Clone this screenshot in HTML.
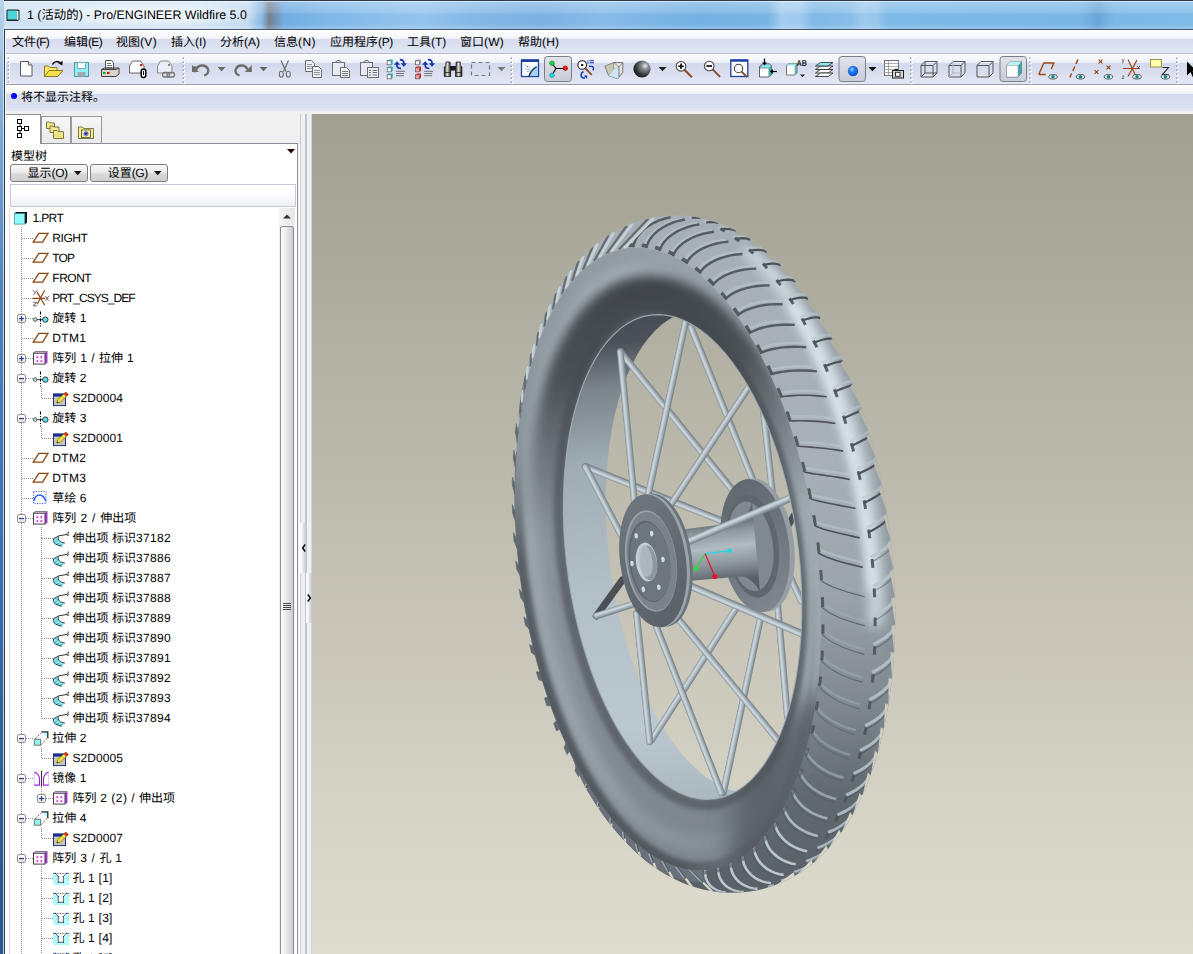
<!DOCTYPE html>
<html><head><meta charset="utf-8"><title>Pro/ENGINEER</title>
<style>
html,body{margin:0;padding:0;}
html{overflow:hidden;width:1193px;height:954px;}
body{text-rendering:geometricPrecision;width:1193px;height:954px;overflow:hidden;position:relative;background:#fff;font-family:"Liberation Sans","Noto Sans CJK SC",sans-serif;font-size:12px;}
#w{position:absolute;left:0;top:0;width:1193px;height:954px;overflow:hidden;}
.a{position:absolute;}
.t{position:absolute;white-space:nowrap;}
svg{display:inline-block;}
svg.i{position:absolute;overflow:visible;}

</style></head>
<body>
<div id="w">
<!-- sec_frame -->
<div class="a" style="left:0px;top:0px;width:1193px;height:30px;background:linear-gradient(90deg,#cfe2f5 0px,#d4e5f6 200px,#c3dbf2 248px,#8cb8e2 262px,#74808e 269px,#7496bd 277px,#72ace0 284px,#80b8e8 330px,#94c4ed 420px,#86b9e7 470px,#7cb1e2 540px,#88bbe9 600px,#74b1e2 700px,#79b5e4 768px,#a4cdf0 782px,#a0caee 800px,#80b9e6 814px,#88bee8 850px,#9dc9ee 862px,#98c6ec 876px,#7ebae8 888px,#7ab7e6 1080px,#6aa5d8 1098px,#7cb8e6 1114px,#80bbe8 1193px);"></div>
<div class="a" style="left:0px;top:0px;width:1193px;height:30px;background:linear-gradient(180deg,rgba(255,255,255,.30) 0,rgba(255,255,255,.16) 40%,rgba(255,255,255,0) 48%,rgba(255,255,255,0) 80%,rgba(255,255,255,.22) 100%);"></div>
<div class="a" style="left:14px;top:3px;width:250px;height:24px;background:radial-gradient(ellipse at center,rgba(255,255,255,.7) 0,rgba(255,255,255,.4) 45%,rgba(255,255,255,0) 72%);"></div>
<div class="a" style="left:0px;top:0px;width:1193px;height:1px;background:#2f3b4b;"></div>
<div class="a" style="left:0px;top:1px;width:1193px;height:1px;background:rgba(255,255,255,.5);"></div>
<div class="a" style="left:0px;top:0px;width:4px;height:954px;background:linear-gradient(180deg,#b9d3ec 0,#a3c4e4 60px,#7fa9d4 130px,#4f82b9 300px,#3f74ad 520px,#2f6097 760px,#2a568a 954px);"></div>
<div class="a" style="left:3px;top:28px;width:1px;height:926px;background:rgba(215,232,248,.85);"></div>
<div class="a" style="left:4px;top:29px;width:1px;height:925px;background:#2b3b52;"></div>
<div class="a" style="left:5px;top:29px;width:1188px;height:1px;background:#45566d;"></div>
<div class="a" style="left:5px;top:30px;width:1px;height:924px;background:#fff;"></div>
<div class="a" style="left:6px;top:30px;width:1187px;height:24px;background:linear-gradient(180deg,#fefeff 0,#f7f8fc 7px,#eff1f9 9px,#d6dbee 9.5px,#dce1f1 16px,#e4e8f5 23px);"></div>
<div class="a" style="left:6px;top:53px;width:1187px;height:1px;background:#b9bed3;"></div>
<div class="a" style="left:6px;top:54px;width:1187px;height:31px;background:linear-gradient(180deg,#fbfcfe 0,#f3f5fb 6px,#eceef8 9px,#d3d9ed 9.5px,#d9deef 18px,#e2e6f4 29px,#e6e9f5 31px);"></div>
<div class="a" style="left:6px;top:84px;width:1187px;height:1px;background:#9a9eb0;"></div>
<div class="a" style="left:6px;top:85px;width:1187px;height:26px;background:linear-gradient(180deg,#ffffff 0,#fcfcfe 3px,#eef0f8 9px,#d5dbee 9.5px,#d9deef 16px,#e0e5f4 25.5px);"></div>
<div class="a" style="left:6px;top:110.5px;width:1187px;height:3.5px;background:#f0f0f0;"></div>
<div class="t" style="left:12px;top:33px;font-size:12px;line-height:18px;color:#000;">文件<span style="letter-spacing:-0.774px">(F)</span></div>
<div class="t" style="left:64px;top:33px;font-size:12px;line-height:18px;color:#000;">编辑<span style="letter-spacing:-0.665px">(E)</span></div>
<div class="t" style="left:116px;top:33px;font-size:12px;line-height:18px;color:#000;">视图<span style="letter-spacing:0.335px">(V)</span></div>
<div class="t" style="left:171px;top:33px;font-size:12px;line-height:18px;color:#000;">插入<span style="letter-spacing:-0.109px">(I)</span></div>
<div class="t" style="left:220px;top:33px;font-size:12px;line-height:18px;color:#000;">分析<span style="letter-spacing:0.001px">(A)</span></div>
<div class="t" style="left:274px;top:33px;font-size:12px;line-height:18px;color:#000;">信息<span style="letter-spacing:0.447px">(N)</span></div>
<div class="t" style="left:330px;top:33px;font-size:12px;line-height:18px;color:#000;">应用程序<span style="letter-spacing:-0.332px">(P)</span></div>
<div class="t" style="left:407px;top:33px;font-size:12px;line-height:18px;color:#000;">工具<span style="letter-spacing:-0.107px">(T)</span></div>
<div class="t" style="left:460px;top:33px;font-size:12px;line-height:18px;color:#000;">窗口<span style="letter-spacing:0.227px">(W)</span></div>
<div class="t" style="left:518px;top:33px;font-size:12px;line-height:18px;color:#000;">帮助<span style="letter-spacing:0.114px">(H)</span></div>
<div class="t" style="left:27px;top:5.5px;font-size:12.4px;line-height:19px;color:#000;"><span style="letter-spacing:0.007px">1 (</span>活动的<span style="letter-spacing:0.007px">) - Pro/ENGINEER Wildfire 5.0</span></div>
<svg class="i" style="left:5px;top:8px" width="16" height="14" viewBox="0 0 16 14"><path d="M2.5 1.5h11l1 1v9l-1.5 1.5h-11l-0.5 -0.5v-10z" fill="#222"/><rect x="2.5" y="2.5" width="9.5" height="9" fill="#49d6d6"/><path d="M12 2.5l1.5 0.5v8.5l-1.5 0.5z" fill="#e8e8e8"/></svg>
<div class="a" style="left:11px;top:93px;width:6px;height:6px;border-radius:3px;background:#0000ff"></div>
<div class="t" style="left:21px;top:88px;font-size:12px;line-height:18px;color:#000;">将不显示注释。</div>
<div class="a" style="left:312px;top:114px;width:881px;height:840px;background:linear-gradient(180deg,#a19f92 0,#b4b2a5 30%,#c9c6b9 62%,#d9d6ca 88%,#dedbcf 100%);"></div>
<div class="a" style="left:298px;top:114px;width:14px;height:840px;background:#f0f0f0;"></div>
<div class="a" style="left:298px;top:144px;width:2px;height:810px;background:#fff;"></div>
<div class="a" style="left:300px;top:114px;width:1px;height:840px;background:#bfcfe2;"></div>
<div class="a" style="left:305px;top:114px;width:2px;height:840px;background:#b9c9dd;"></div>
<div class="a" style="left:311px;top:114px;width:1px;height:840px;background:#c9d8ea;"></div>
<div class="a" style="left:300px;top:523px;width:6px;height:50px;background:linear-gradient(90deg,#ffffff 0,#f4f4f5 35%,#cfcfd2 85%,#c4c6cc 100%);"></div>
<div class="a" style="left:306px;top:573px;width:6px;height:50px;background:linear-gradient(90deg,#ffffff 0,#f4f4f5 35%,#cfcfd2 85%,#c4c6cc 100%);"></div>
<svg class="i" style="left:301px;top:543px" width="6" height="10"><path d="M4.2 1.5L1.6 5l2.6 3.5" fill="none" stroke="#000" stroke-width="1.4"/></svg>
<svg class="i" style="left:306px;top:593px" width="6" height="10"><path d="M1.8 1.5L4.4 5 1.8 8.5" fill="none" stroke="#000" stroke-width="1.4"/></svg>
<!-- sec_toolbar -->
<svg class="i" style="left:0;top:54px" width="1193" height="31" viewBox="0 54 1193 31">
<defs><linearGradient id="selg" x1="0" y1="0" x2="0" y2="1"><stop offset="0" stop-color="#e2e3ea"/><stop offset="1" stop-color="#c9cbd8"/></linearGradient><radialGradient id="sph" cx="0.68" cy="0.32" r="0.8"><stop offset="0" stop-color="#e8ecef"/><stop offset="0.25" stop-color="#8a8f93"/><stop offset="0.7" stop-color="#2e3133"/><stop offset="1" stop-color="#151617"/></radialGradient><radialGradient id="bdot" cx="0.4" cy="0.35" r="0.75"><stop offset="0" stop-color="#9fd0ff"/><stop offset="0.35" stop-color="#1f7bf0"/><stop offset="1" stop-color="#0a49c8"/></radialGradient><linearGradient id="bino" x1="0" y1="0" x2="1" y2="0"><stop offset="0" stop-color="#111"/><stop offset="0.45" stop-color="#e8e6da"/><stop offset="1" stop-color="#111"/></linearGradient></defs>
<rect x="8.1" y="58.1" width="2" height="2" fill="#fff"/><rect x="7.5" y="57.5" width="1.5" height="1.5" fill="#9aa0b4"/><rect x="8.1" y="62.1" width="2" height="2" fill="#fff"/><rect x="7.5" y="61.5" width="1.5" height="1.5" fill="#9aa0b4"/><rect x="8.1" y="66.1" width="2" height="2" fill="#fff"/><rect x="7.5" y="65.5" width="1.5" height="1.5" fill="#9aa0b4"/><rect x="8.1" y="70.1" width="2" height="2" fill="#fff"/><rect x="7.5" y="69.5" width="1.5" height="1.5" fill="#9aa0b4"/><rect x="8.1" y="74.1" width="2" height="2" fill="#fff"/><rect x="7.5" y="73.5" width="1.5" height="1.5" fill="#9aa0b4"/><rect x="8.1" y="78.1" width="2" height="2" fill="#fff"/><rect x="7.5" y="77.5" width="1.5" height="1.5" fill="#9aa0b4"/><rect x="8.1" y="82.1" width="2" height="2" fill="#fff"/><rect x="7.5" y="81.5" width="1.5" height="1.5" fill="#9aa0b4"/>
<rect x="183.1" y="58.1" width="2" height="2" fill="#fff"/><rect x="182.5" y="57.5" width="1.5" height="1.5" fill="#9aa0b4"/><rect x="183.1" y="62.1" width="2" height="2" fill="#fff"/><rect x="182.5" y="61.5" width="1.5" height="1.5" fill="#9aa0b4"/><rect x="183.1" y="66.1" width="2" height="2" fill="#fff"/><rect x="182.5" y="65.5" width="1.5" height="1.5" fill="#9aa0b4"/><rect x="183.1" y="70.1" width="2" height="2" fill="#fff"/><rect x="182.5" y="69.5" width="1.5" height="1.5" fill="#9aa0b4"/><rect x="183.1" y="74.1" width="2" height="2" fill="#fff"/><rect x="182.5" y="73.5" width="1.5" height="1.5" fill="#9aa0b4"/><rect x="183.1" y="78.1" width="2" height="2" fill="#fff"/><rect x="182.5" y="77.5" width="1.5" height="1.5" fill="#9aa0b4"/><rect x="183.1" y="82.1" width="2" height="2" fill="#fff"/><rect x="182.5" y="81.5" width="1.5" height="1.5" fill="#9aa0b4"/>
<rect x="511.1" y="58.1" width="2" height="2" fill="#fff"/><rect x="510.5" y="57.5" width="1.5" height="1.5" fill="#9aa0b4"/><rect x="511.1" y="62.1" width="2" height="2" fill="#fff"/><rect x="510.5" y="61.5" width="1.5" height="1.5" fill="#9aa0b4"/><rect x="511.1" y="66.1" width="2" height="2" fill="#fff"/><rect x="510.5" y="65.5" width="1.5" height="1.5" fill="#9aa0b4"/><rect x="511.1" y="70.1" width="2" height="2" fill="#fff"/><rect x="510.5" y="69.5" width="1.5" height="1.5" fill="#9aa0b4"/><rect x="511.1" y="74.1" width="2" height="2" fill="#fff"/><rect x="510.5" y="73.5" width="1.5" height="1.5" fill="#9aa0b4"/><rect x="511.1" y="78.1" width="2" height="2" fill="#fff"/><rect x="510.5" y="77.5" width="1.5" height="1.5" fill="#9aa0b4"/><rect x="511.1" y="82.1" width="2" height="2" fill="#fff"/><rect x="510.5" y="81.5" width="1.5" height="1.5" fill="#9aa0b4"/>
<rect x="910.6" y="58.1" width="2" height="2" fill="#fff"/><rect x="910" y="57.5" width="1.5" height="1.5" fill="#9aa0b4"/><rect x="910.6" y="62.1" width="2" height="2" fill="#fff"/><rect x="910" y="61.5" width="1.5" height="1.5" fill="#9aa0b4"/><rect x="910.6" y="66.1" width="2" height="2" fill="#fff"/><rect x="910" y="65.5" width="1.5" height="1.5" fill="#9aa0b4"/><rect x="910.6" y="70.1" width="2" height="2" fill="#fff"/><rect x="910" y="69.5" width="1.5" height="1.5" fill="#9aa0b4"/><rect x="910.6" y="74.1" width="2" height="2" fill="#fff"/><rect x="910" y="73.5" width="1.5" height="1.5" fill="#9aa0b4"/><rect x="910.6" y="78.1" width="2" height="2" fill="#fff"/><rect x="910" y="77.5" width="1.5" height="1.5" fill="#9aa0b4"/><rect x="910.6" y="82.1" width="2" height="2" fill="#fff"/><rect x="910" y="81.5" width="1.5" height="1.5" fill="#9aa0b4"/>
<rect x="1029.6" y="58.1" width="2" height="2" fill="#fff"/><rect x="1029" y="57.5" width="1.5" height="1.5" fill="#9aa0b4"/><rect x="1029.6" y="62.1" width="2" height="2" fill="#fff"/><rect x="1029" y="61.5" width="1.5" height="1.5" fill="#9aa0b4"/><rect x="1029.6" y="66.1" width="2" height="2" fill="#fff"/><rect x="1029" y="65.5" width="1.5" height="1.5" fill="#9aa0b4"/><rect x="1029.6" y="70.1" width="2" height="2" fill="#fff"/><rect x="1029" y="69.5" width="1.5" height="1.5" fill="#9aa0b4"/><rect x="1029.6" y="74.1" width="2" height="2" fill="#fff"/><rect x="1029" y="73.5" width="1.5" height="1.5" fill="#9aa0b4"/><rect x="1029.6" y="78.1" width="2" height="2" fill="#fff"/><rect x="1029" y="77.5" width="1.5" height="1.5" fill="#9aa0b4"/><rect x="1029.6" y="82.1" width="2" height="2" fill="#fff"/><rect x="1029" y="81.5" width="1.5" height="1.5" fill="#9aa0b4"/>
<rect x="1176.6" y="58.1" width="2" height="2" fill="#fff"/><rect x="1176" y="57.5" width="1.5" height="1.5" fill="#9aa0b4"/><rect x="1176.6" y="62.1" width="2" height="2" fill="#fff"/><rect x="1176" y="61.5" width="1.5" height="1.5" fill="#9aa0b4"/><rect x="1176.6" y="66.1" width="2" height="2" fill="#fff"/><rect x="1176" y="65.5" width="1.5" height="1.5" fill="#9aa0b4"/><rect x="1176.6" y="70.1" width="2" height="2" fill="#fff"/><rect x="1176" y="69.5" width="1.5" height="1.5" fill="#9aa0b4"/><rect x="1176.6" y="74.1" width="2" height="2" fill="#fff"/><rect x="1176" y="73.5" width="1.5" height="1.5" fill="#9aa0b4"/><rect x="1176.6" y="78.1" width="2" height="2" fill="#fff"/><rect x="1176" y="77.5" width="1.5" height="1.5" fill="#9aa0b4"/><rect x="1176.6" y="82.1" width="2" height="2" fill="#fff"/><rect x="1176" y="81.5" width="1.5" height="1.5" fill="#9aa0b4"/>
<path d="M20.5 61.5h8l3.5 3.5v11h-11.5z" fill="#fff" stroke="#5a5a5a"/><path d="M28.5 61.5v3.5h3.5" fill="#e8e8e8" stroke="#5a5a5a"/>
<path d="M44.5 76.5v-10.5h4l1.5 1.5h7v3" fill="#f7e96a" stroke="#8a7a20"/><path d="M44.5 76.5l4.5 -6h14l-5.5 6z" fill="#f3df4a" stroke="#8a7a20"/><path d="M52.5 64.5c1.5 -3.5 6 -4 8 -0.8" fill="none" stroke="#000" stroke-width="1.4"/><path d="M58.3 63.2l4 2.2 0.4 -4.4z" fill="#000"/>
<rect x="74.5" y="62.5" width="14" height="14" fill="#8ff1f6" stroke="#4a9aa8"/><rect x="77.5" y="62.5" width="8" height="6" fill="#fff" stroke="#7ab"/><rect x="77.5" y="72" width="8" height="4.5" fill="#a8a8b0"/>
<path d="M105.5 69v-8.5h6l2 2v6.5z" fill="#fff" stroke="#555"/><path d="M107 63.5h4M107 65.5h5M107 67.5h5" stroke="#555" stroke-width=".8"/><path d="M101.5 69.5h14.5l3 -1.5v6l-3 2.5h-14.5z" fill="#d8d6cc" stroke="#444"/><path d="M101.5 69.5l3 -1.5h14.5" fill="none" stroke="#444"/><rect x="103" y="72" width="2.5" height="2" fill="#1a1"/><rect x="107" y="72" width="2.5" height="2" fill="#c11"/>
<path d="M129.5 66l3 -5h8l3.5 5v7h-14.5z" fill="#fff" stroke="#666"/><rect x="140" y="64" width="2.2" height="2.2" fill="#d11"/><rect x="141.2" y="69" width="4.6" height="8.5" rx="2.3" fill="#fff" stroke="#000" stroke-width="1.5"/><path d="M143.5 71v4" stroke="#000"/>
<path d="M157.5 66l3 -5h8l3.5 5v7h-14.5z" fill="#eceef6" stroke="#8a8a8a"/><rect x="168" y="64" width="2" height="2" fill="#888"/><rect x="162.5" y="72.5" width="7" height="4.5" rx="2.2" fill="none" stroke="#777" stroke-width="1.3"/><rect x="167" y="72.5" width="7.5" height="4.5" rx="2.2" fill="none" stroke="#777" stroke-width="1.3"/>
<path d="M196.5 69.5c1 -4.5 9 -6 11.5 -0.5c1.2 3 -0.8 5.8 -3.8 6.4" fill="none" stroke="#6e6e6e" stroke-width="2.4"/><path d="M191.8 66.2l7.6 0.6 -4.8 5.9z" fill="#6e6e6e"/><path d="M192 65v7h7z" fill="#6e6e6e"/>
<path d="M217.5 67h8l-4 4.2z" fill="#666"/>
<path d="M247.3 69.5c-1 -4.5 -9 -6 -11.5 -0.5c-1.2 3 0.8 5.8 3.8 6.4" fill="none" stroke="#6e6e6e" stroke-width="2.4"/><path d="M251.8 65v7h-7z" fill="#6e6e6e"/>
<path d="M259.5 67h8l-4 4.2z" fill="#666"/>
<path d="M281 60.5l5 11M288.5 60.5l-5 11" stroke="#6e6e6e" stroke-width="1.2" fill="none"/><ellipse cx="281.3" cy="74.3" rx="2" ry="3" fill="none" stroke="#6e6e6e" stroke-width="1.1"/><ellipse cx="288.3" cy="74.3" rx="2" ry="3" fill="none" stroke="#6e6e6e" stroke-width="1.1"/>
<path d="M305.5 60.500h6l3 3v8h-9z" fill="#eef0f8" stroke="#6e6e6e"/><path d="M307 64.500h5M307 66.500h5M307 68.500h5" stroke="#6e6e6e" stroke-width=".7"/><path d="M312.5 66.500h6l3 3v8h-9z" fill="#eef0f8" stroke="#6e6e6e"/><path d="M314 70.500h6M314 72.500h6M314 74.500h6" stroke="#6e6e6e" stroke-width=".7"/>
<rect x="332.500" y="62.500" width="12" height="13" fill="#e8eaf3" stroke="#6e6e6e"/><path d="M335.500 62.500l1.500 -2h3l1.500 2z" fill="#e8eaf3" stroke="#6e6e6e"/><path d="M340.500 67.500h6l3 3v7h-9z" fill="#eef0f8" stroke="#6e6e6e"/><path d="M342 71.500h6M342 73.500h6M342 75.500h6" stroke="#6e6e6e" stroke-width=".9"/>
<rect x="360.500" y="62.500" width="12" height="13" fill="#e8eaf3" stroke="#6e6e6e"/><path d="M363.500 62.500l1.500 -2h3l1.500 2z" fill="#e8eaf3" stroke="#6e6e6e"/><rect x="367.500" y="67.500" width="11" height="10" fill="#eef0f8" stroke="#6e6e6e"/><path d="M369 70.500h2M372.500 70.500h4.500M369 72.500h2M372.500 72.500h4.500M369 75h2M372.500 75h4.500" stroke="#6e6e6e" stroke-width="1.1"/>
<path d="M387 60.8l1.500 -1.300h4.300v4.300l-1.500 1.300z" fill="#19c4c8"/><rect x="387.2" y="60.8" width="4" height="4" fill="#fff" stroke="#666" stroke-width=".8"/><path d="M387 67.8l1.500 -1.300h4.300v4.300l-1.500 1.300z" fill="#19c4c8"/><rect x="387.2" y="67.8" width="4" height="4" fill="#fff" stroke="#666" stroke-width=".8"/><path d="M387 74.8l1.500 -1.300h4.300v4.300l-1.500 1.300z" fill="#19c4c8"/><rect x="387.2" y="74.8" width="4" height="4" fill="#fff" stroke="#666" stroke-width=".8"/><path d="M397 62.200v3c0 2 1.500 3.200 4 3.200" fill="none" stroke="#0c34b8" stroke-width="1.700"/><path d="M393.9 64.800l3.100 -3.600 3.100 3.600z" fill="#0c34b8"/><path d="M399.8 59.600c2.500 0 4 1.200 4 3.200v1.500" fill="none" stroke="#0c34b8" stroke-width="1.700"/><path d="M400.7 63.200l3.100 3.600 3.100 -3.600z" fill="#0c34b8"/><path d="M396 71.300h9M396 73.500h8M396 75.700h8" stroke="#666" stroke-width=".9"/>
<path d="M415.2 60.8l1.500 -1.300h4.300v4.300l-1.500 1.300z" fill="#aaa"/><rect x="415.4" y="60.8" width="4" height="4" fill="#f4f4f4" stroke="#666" stroke-width=".8"/><path d="M415.2 67.8l1.500 -1.300h4.300v4.300l-1.500 1.300z" fill="#e01818"/><rect x="415.4" y="67.8" width="4" height="4" fill="#ff9a9a" stroke="#666" stroke-width=".8"/><path d="M415.2 74.8l1.500 -1.300h4.300v4.300l-1.500 1.300z" fill="#e01818"/><rect x="415.4" y="74.8" width="4" height="4" fill="#ff9a9a" stroke="#666" stroke-width=".8"/><path d="M425.2 62.200v3c0 2 1.500 3.200 4 3.200" fill="none" stroke="#0c34b8" stroke-width="1.700"/><path d="M422.1 64.800l3.100 -3.600 3.100 3.600z" fill="#0c34b8"/><path d="M428 59.600c2.500 0 4 1.200 4 3.200v1.500" fill="none" stroke="#0c34b8" stroke-width="1.700"/><path d="M428.9 63.200l3.100 3.600 3.100 -3.600z" fill="#0c34b8"/><path d="M424.2 71.300h9M424.2 73.500h8M424.2 75.700h8" stroke="#666" stroke-width=".9"/>
<path d="M444.300 76.500v-9.500l1.600 -1.500v-3.500h4.200v3.500l0.600 1.500v9.500z" fill="url(#bino)" stroke="#111" stroke-width=".7"/><path d="M455.500 76.500v-9.500l0.600 -1.500v-3.500h4.200v3.500l1.600 1.500v9.500z" fill="url(#bino)" stroke="#111" stroke-width=".7"/><rect x="450.500" y="66" width="5.200" height="4.500" fill="#1a1a1a"/><path d="M444.300 72.500h6.400M455.500 72.500h6.400" stroke="#222" stroke-width=".8"/>
<rect x="471.500" y="62.500" width="18" height="13" fill="none" stroke="#7a7a7a" stroke-width="1.2" stroke-dasharray="4 3"/>
<path d="M497.5 67h8l-4 4.2z" fill="#777"/>
<rect x="521.500" y="60" width="17" height="16.500" fill="#fff" stroke="#1c3fa0" stroke-width="1.3"/><rect x="521.500" y="59.500" width="17" height="2.500" fill="#1c3fa0"/><path d="M529 76v-4c2 -3 5 -6 9 -7v11z" fill="#a8d0f0"/><path d="M529 76c1.500 -4 4 -7 7.500 -9" fill="none" stroke="#223" stroke-width="1.300"/><path d="M525 64.500l1 1M527 66l1 1M526 68.500l1 1M528.500 69l1 1M529 66.500l1 1M527.500 71l1 1" stroke="#2a6fd0" stroke-width="1"/>
<rect x="544.5" y="56.5" width="27" height="25" rx="3" fill="url(#selg)" stroke="#7d7d84" stroke-width="1"/>
<path d="M552 63.500l4 5 -4 6.500M556 68.500h9" fill="none" stroke="#000" stroke-width="1.200"/><circle cx="552" cy="63.300" r="2.300" fill="#1fd34a" stroke="#0a7a22" stroke-width=".6"/><circle cx="565.300" cy="68.200" r="2.300" fill="#ee1c1c" stroke="#900" stroke-width=".6"/><circle cx="552" cy="75.200" r="2.300" fill="#22d8e8" stroke="#0a8a98" stroke-width=".6"/>
<path d="M585.500 68.500l6.300 6.300" stroke="#8a4a2a" stroke-width="1.800"/><circle cx="582.200" cy="65" r="4.300" fill="#fff" stroke="#222" stroke-width="1.100"/><rect x="581.200" y="64" width="2" height="2" fill="#000"/><path d="M589.500 60.800h4.500M589.500 62.800h4.500" stroke="#0c34b8" stroke-width="1.100"/><rect x="587.300" y="60.300" width="1.200" height="1.200" fill="#0c34b8"/><rect x="587.300" y="62.300" width="1.200" height="1.200" fill="#0c34b8"/><path d="M589 66.300h3c1.800 0.400 1.800 2.600 0.800 4" fill="none" stroke="#0c34b8" stroke-width="1.300"/><path d="M583.500 71.500c-3 1.500 -3.500 5 -0.500 6.500h2" fill="none" stroke="#0c34b8" stroke-width="1.500"/><path d="M583.800 75.500h3.400v3.400z" fill="#0c34b8"/>
<path d="M605 66.300l8.700 -3.700h9.100v9.700l-5.100 6.400 -9 -3z" fill="#e6e5dc" stroke="#666" stroke-width=".9"/><path d="M605 66.300l8.700 -3.700v11.400l-5 1.700z" fill="#c9c6b4" stroke="#777" stroke-width=".6"/><path d="M608.700 75.700l5 -6.500 5.300 -2.200v10l-1.300 1.700z" fill="#cfe6f8" stroke="#8ab" stroke-width=".5"/><path d="M613.700 62.600l5.300 4.400 3.800 -4.400M619 67v10" fill="none" stroke="#777" stroke-width=".8"/>
<circle cx="642" cy="69" r="8.600" fill="url(#sph)"/>
<path d="M658.5 67h8l-4 4.200z" fill="#222"/>
<path d="M684.4 69.700l7.500 7.500" stroke="#8a4a2a" stroke-width="2"/><circle cx="681" cy="66.300" r="4.800" fill="#fff" stroke="#444" stroke-width="1.100"/><path d="M678.2 66.300h5.600" stroke="#000" stroke-width="1.600"/><path d="M681 63.500v5.600" stroke="#000" stroke-width="1.600"/>
<path d="M712.6 69.400l7.500 7.500" stroke="#8a4a2a" stroke-width="2"/><circle cx="709.2" cy="66" r="4.800" fill="#fff" stroke="#444" stroke-width="1.100"/><path d="M706.4 66h5.600" stroke="#000" stroke-width="1.600"/>
<rect x="730.800" y="60" width="17" height="16.500" fill="#fff" stroke="#1c3fa0" stroke-width="1.300"/><rect x="730.800" y="59.500" width="17" height="2.200" fill="#1c3fa0"/><path d="M741.500 71.500l5.500 5.500" stroke="#8a4a2a" stroke-width="1.800"/><circle cx="738.500" cy="68.500" r="4.200" fill="#fff" stroke="#444" stroke-width="1.100"/>
<path d="M759.500 66.500l3 -2.500h7l2 2v9l-3 2h-9z" fill="#fff" stroke="#555" stroke-width=".9"/><path d="M762.500 64l7 0 2 2 -3 2h-9z" fill="#8fe8ee" stroke="#555" stroke-width=".6"/><path d="M768.500 68v9l3 -2v-9z" fill="#49a7b0"/><path d="M764.500 58.500v5" stroke="#000" stroke-width="1.200"/><path d="M762 62.500h5l-2.500 3z" fill="#000"/><path d="M777 71.500h-5" stroke="#000" stroke-width="1.200"/><path d="M773 69v5l-3.200 -2.500z" fill="#000"/>
<path d="M786.500 65.500l2.500 -2h8v9.500l-2.500 2h-8z" fill="#fff" stroke="#666" stroke-width=".9"/><path d="M789 63.500h8l-2.500 2h-8z" fill="#8fe8ee"/><path d="M794.500 65.500v9.500l2.500 -2v-9.500z" fill="#49a7b0" opacity=".8"/><text x="796.500" y="66" font-family="Liberation Sans" font-size="8.500" font-weight="bold" fill="#222" textLength="10.500" lengthAdjust="spacingAndGlyphs">AB</text><path d="M800 74.500h5l-2.500 2.800z" fill="#222"/>
<path d="M815.500 73l5 -3.500h12.500l-5 3.500z" fill="#fff" stroke="#333" stroke-width=".9"/><path d="M815.500 76.500l5 -3.500h12.500l-5 3.500z" fill="#fff" stroke="#333" stroke-width=".9"/><path d="M815.500 69.500l5 -3.500h12.500l-5 3.500z" fill="#fff" stroke="#333" stroke-width=".9"/><path d="M815.500 66l5 -3.500h12.500l-5 3.500z" fill="#8fe8ee" stroke="#333" stroke-width=".9"/>
<rect x="839" y="56.5" width="26.5" height="25" rx="3" fill="url(#selg)" stroke="#7d7d84" stroke-width="1"/>
<circle cx="853" cy="71" r="5.200" fill="url(#bdot)"/>
<path d="M868.5 67h8l-4 4.2z" fill="#111"/>
<rect x="884.500" y="60.500" width="14" height="15" fill="#fff" stroke="#666" stroke-width=".9"/><path d="M884.500 63.500h14M884.500 66.500h14M884.500 69.500h14M884.500 72.500h14M888.500 60.500v15" stroke="#888" stroke-width=".7"/><rect x="892.500" y="70.500" width="11" height="7.500" fill="#d6d4cc" stroke="#222" stroke-width="1"/><rect x="894.500" y="68.800" width="3.500" height="2" fill="#222"/><rect x="895.500" y="72.300" width="4.500" height="4" fill="#fff" stroke="#222" stroke-width=".9"/>
<path d="M921 65.500h12v11.500h-12zM921 65.500l4 -4h12l-4 4M933 77l4 -4v-11.500" fill="none" stroke="#555" stroke-width="1"/><path d="M921 77l4 -4h12M925 61.500v11.500" fill="none" stroke="#555" stroke-width="1"/>
<path d="M949 65.500h12v11.500h-12zM949 65.500l4 -4h12l-4 4M961 77l4 -4v-11.500" fill="none" stroke="#555" stroke-width="1"/><path d="M949 77l4 -4h12M953 61.500v11.500" fill="none" stroke="#b5b5bb" stroke-width="1"/>
<path d="M977 65.500h12v11.500h-12zM977 65.500l4 -4h12l-4 4M989 77l4 -4v-11.500" fill="none" stroke="#555" stroke-width="1"/>
<rect x="1000" y="56.5" width="26.5" height="25" rx="3" fill="url(#selg)" stroke="#7d7d84" stroke-width="1"/>
<path d="M1006.500 65.500l3.500 -4h11.500v11.500l-3.500 4h-11.500z" fill="#fff" stroke="#667" stroke-width=".8"/><path d="M1006.500 65.500l3.500 -4h11.500l-3.500 4z" fill="#b9f1f4"/><path d="M1018 65.500l3.500 -4v11.500l-3.500 4z" fill="#3fa3ad"/><rect x="1006.500" y="65.500" width="11.500" height="11.500" fill="#fff" stroke="#99a" stroke-width=".6"/>
<path d="M1038.800 74.500l5 -11.500h10l-2.500 6M1038.800 74.500h7" fill="none" stroke="#9a4a14" stroke-width="1.400"/><ellipse cx="1053" cy="76.800" rx="4.300" ry="2.200" fill="#e8f4f4" stroke="#333" stroke-width=".8"/><circle cx="1053" cy="76.800" r="1.800" fill="#138a8a"/>
<path d="M1078 59.500l-2 4.500M1074.800 66.500l-2 4.500M1071.600 73.500l-1.800 4" stroke="#9a4a14" stroke-width="1.500"/><ellipse cx="1080.500" cy="76.800" rx="4.300" ry="2.200" fill="#e8f4f4" stroke="#333" stroke-width=".8"/><circle cx="1080.500" cy="76.800" r="1.800" fill="#138a8a"/>
<path d="M1098.600 59.600l3.800 3.800M1102.400 59.600l-3.800 3.800" stroke="#9a4a14" stroke-width="1.2"/><path d="M1094.600 70.100l3.800 3.800M1098.400 70.100l-3.800 3.800" stroke="#9a4a14" stroke-width="1.2"/><path d="M1106.600 65.600l3.800 3.800M1110.400 65.600l-3.800 3.800" stroke="#9a4a14" stroke-width="1.2"/><ellipse cx="1108.500" cy="76.800" rx="4.300" ry="2.200" fill="#e8f4f4" stroke="#333" stroke-width=".8"/><circle cx="1108.500" cy="76.800" r="1.800" fill="#138a8a"/>
<path d="M1128 59.500l8 17M1137 60l-9 16.500M1123 68.500h17" stroke="#9a4a14" stroke-width="1.200"/><path d="M1137 66l3 3M1140 66l-3 3" stroke="#555" stroke-width="0.9"/><text x="1121.500" y="62" font-family="Liberation Sans" font-size="6" fill="#444">y</text><text x="1121.500" y="79" font-family="Liberation Sans" font-size="6" fill="#444">z</text><ellipse cx="1137" cy="76.800" rx="4.300" ry="2.200" fill="#e8f4f4" stroke="#333" stroke-width=".8"/><circle cx="1137" cy="76.800" r="1.800" fill="#138a8a"/>
<rect x="1150.500" y="59.500" width="11" height="7.500" fill="#ffffa8" stroke="#8a8a40" stroke-width=".9"/><path d="M1162.500 67.500h6l-6 7h6" fill="none" stroke="#222" stroke-width="1.100"/><ellipse cx="1165.500" cy="76.800" rx="4.300" ry="2.200" fill="#e8f4f4" stroke="#333" stroke-width=".8"/><circle cx="1165.500" cy="76.800" r="1.800" fill="#138a8a"/>
<path d="M1187 61.500v14l3.500 -3.500 2.500 5.500 2 -1 -2.500 -5.500h4z" fill="#000"/>
</svg>
<!-- sec_panel -->
<div class="a" style="left:6px;top:114px;width:293px;height:840px;background:#f0f0f0;"></div>
<div class="a" style="left:6px;top:143px;width:292px;height:811px;background:#fff;border-top:1px solid #8b8f97;border-right:1px solid #8b8f97;box-sizing:border-box;"></div>
<div class="a" style="left:41px;top:116px;width:30px;height:27px;background:linear-gradient(180deg,#f6f6f6,#e9e9e9);border:1px solid #9a9a9a;border-bottom:none;box-sizing:border-box;"></div>
<div class="a" style="left:71px;top:116px;width:31px;height:27px;background:linear-gradient(180deg,#f6f6f6,#e9e9e9);border:1px solid #9a9a9a;border-bottom:none;box-sizing:border-box;"></div>
<div class="a" style="left:6px;top:114px;width:35px;height:30px;background:#fff;border:1px solid #8b8f97;border-bottom:none;border-left:none;box-sizing:border-box;"></div>
<svg class="i" style="left:0;top:114px" width="110" height="30" viewBox="0 114 110 30"><path d="M20 124.500v9M20 128.500h5" stroke="#000" stroke-width="1" fill="none"/><rect x="17.500" y="119.500" width="4" height="4" fill="#fff" stroke="#000"/><rect x="17.500" y="126.500" width="4" height="4" fill="#fff" stroke="#000"/><rect x="17.500" y="133.500" width="4" height="4" fill="#fff" stroke="#000"/><rect x="24.500" y="126.500" width="4" height="4" fill="#fff" stroke="#000"/><path d="M46.500 128.500v-6.500h3l1 1h4v5.500z" fill="#f5e98a" stroke="#6b6b3a" stroke-width=".9"/><path d="M50 132.500v-6.500h3l1 1h5v5.500z" fill="#f5e98a" stroke="#6b6b3a" stroke-width=".9"/><path d="M53.500 138.500v-8h3.500l1 1.200h5.500v6.800z" fill="#f7ee9a" stroke="#6b6b3a" stroke-width=".9"/><rect x="54.500" y="133.500" width="8" height="4" fill="#efe27a"/><path d="M78.500 138.500v-11.500h4l1.200 1.500h9.800v10z" fill="#f7ee8a" stroke="#6b6b3a" stroke-width=".9"/><rect x="81.500" y="130" width="9" height="7.500" fill="#fff9a0" stroke="#333" stroke-width=".7"/><path d="M86 131v5.500M83.300 133.800h5.400M84.200 131.900l3.600 3.700M87.800 131.900l-3.600 3.700" stroke="#1a1ae0" stroke-width="1"/></svg>
<div class="t" style="left:11px;top:146.500px;font-size:12px;line-height:18px;color:#000;">模型树</div>
<svg class="i" style="left:287px;top:149px" width="8" height="5"><path d="M0 0h8l-4 4.500z" fill="#200"/></svg>
<div class="a" style="left:10px;top:164px;width:78px;height:18px;background:linear-gradient(180deg,#f8f8f8 0,#ececec 45%,#d9d9d9 55%,#cfcfcf 100%);border:1px solid #7b7b7b;border-radius:3px;box-sizing:border-box;"></div>
<div class="t" style="left:27.6px;top:163.500px;font-size:12px;line-height:18px;color:#000;">显示<span style="letter-spacing:-0.442px">(O)</span></div>
<svg class="i" style="left:73.5px;top:170.500px" width="8" height="5"><path d="M0 0h7.500l-3.750 4.200z" fill="#111"/></svg>
<div class="a" style="left:90px;top:164px;width:78px;height:18px;background:linear-gradient(180deg,#f8f8f8 0,#ececec 45%,#d9d9d9 55%,#cfcfcf 100%);border:1px solid #7b7b7b;border-radius:3px;box-sizing:border-box;"></div>
<div class="t" style="left:107.8px;top:163.500px;font-size:12px;line-height:18px;color:#000;">设置<span style="letter-spacing:-0.442px">(G)</span></div>
<svg class="i" style="left:153.5px;top:170.500px" width="8" height="5"><path d="M0 0h7.500l-3.750 4.200z" fill="#111"/></svg>
<div class="a" style="left:10px;top:184px;width:286px;height:23px;background:linear-gradient(180deg,#fff 0,#fff 40%,#eceef4 100%);border:1px solid #c6c9d6;box-sizing:border-box;"></div>
<div class="a" style="left:9px;top:208px;width:1px;height:746px;background:#d9dbe8;"></div>
<div class="a" style="left:279px;top:208px;width:16px;height:746px;background:#f0f0f0;"></div>
<div class="a" style="left:279px;top:208px;width:16px;height:17px;background:linear-gradient(90deg,#f4f4f4,#e6e6e6);"></div>
<svg class="i" style="left:283px;top:214px" width="8" height="5"><path d="M0 4.500l4 -4 4 4z" fill="#333"/></svg>
<div class="a" style="left:279.5px;top:226px;width:14.5px;height:740px;background:linear-gradient(90deg,#fbfbfb 0,#efeff1 35%,#dcdce0 70%,#c9c9cf 100%);border:1px solid #8e8e94;border-radius:2px;box-sizing:border-box;"></div>
<svg class="i" style="left:283px;top:603px" width="8" height="8"><path d="M0 .500h8M0 2.500h8M0 4.500h8M0 6.500h8" stroke="#444" stroke-width="1"/></svg>
<div class="t" style="left:32.5px;top:208.500px;font-size:12px;line-height:18px;color:#000;"><span style="letter-spacing:-0.642px">1.PRT</span></div>
<div class="t" style="left:52.3px;top:228.500px;font-size:12px;line-height:18px;color:#000;"><span style="letter-spacing:-0.426px">RIGHT</span></div>
<div class="t" style="left:52.3px;top:248.500px;font-size:12px;line-height:18px;color:#000;"><span style="letter-spacing:-0.889px">TOP</span></div>
<div class="t" style="left:52.3px;top:268.500px;font-size:12px;line-height:18px;color:#000;"><span style="letter-spacing:-0.485px">FRONT</span></div>
<div class="t" style="left:52.3px;top:288.500px;font-size:12px;line-height:18px;color:#000;"><span style="letter-spacing:-0.952px">PRT_CSYS_DEF</span></div>
<div class="t" style="left:52.3px;top:308.500px;font-size:12px;line-height:18px;color:#000;">旋转<span style="letter-spacing:0.146px"> 1</span></div>
<div class="t" style="left:52.3px;top:328.500px;font-size:12px;line-height:18px;color:#000;"><span style="letter-spacing:0.358px">DTM1</span></div>
<div class="t" style="left:52.3px;top:348.500px;font-size:12px;line-height:18px;color:#000;">阵列<span style="letter-spacing:0.540px"> 1 / </span>拉伸<span style="letter-spacing:0.540px"> 1</span></div>
<div class="t" style="left:52.3px;top:368.500px;font-size:12px;line-height:18px;color:#000;">旋转<span style="letter-spacing:0.146px"> 2</span></div>
<div class="t" style="left:72.4px;top:388.500px;font-size:12px;line-height:18px;color:#000;"><span style="letter-spacing:0.066px">S2D0004</span></div>
<div class="t" style="left:52.3px;top:408.500px;font-size:12px;line-height:18px;color:#000;">旋转<span style="letter-spacing:0.146px"> 3</span></div>
<div class="t" style="left:72.4px;top:428.500px;font-size:12px;line-height:18px;color:#000;"><span style="letter-spacing:0.066px">S2D0001</span></div>
<div class="t" style="left:52.3px;top:448.500px;font-size:12px;line-height:18px;color:#000;"><span style="letter-spacing:0.358px">DTM2</span></div>
<div class="t" style="left:52.3px;top:468.500px;font-size:12px;line-height:18px;color:#000;"><span style="letter-spacing:0.358px">DTM3</span></div>
<div class="t" style="left:52.3px;top:488.500px;font-size:12px;line-height:18px;color:#000;">草绘<span style="letter-spacing:0.146px"> 6</span></div>
<div class="t" style="left:52.3px;top:508.500px;font-size:12px;line-height:18px;color:#000;">阵列<span style="letter-spacing:0.798px"> 2 / </span>伸出项</div>
<div class="t" style="left:72.4px;top:528.500px;font-size:12px;line-height:18px;color:#000;">伸出项<span style="letter-spacing:0.299px"> </span>标识<span style="letter-spacing:0.299px">37182</span></div>
<div class="t" style="left:72.4px;top:548.500px;font-size:12px;line-height:18px;color:#000;">伸出项<span style="letter-spacing:0.299px"> </span>标识<span style="letter-spacing:0.299px">37886</span></div>
<div class="t" style="left:72.4px;top:568.500px;font-size:12px;line-height:18px;color:#000;">伸出项<span style="letter-spacing:0.299px"> </span>标识<span style="letter-spacing:0.299px">37887</span></div>
<div class="t" style="left:72.4px;top:588.500px;font-size:12px;line-height:18px;color:#000;">伸出项<span style="letter-spacing:0.299px"> </span>标识<span style="letter-spacing:0.299px">37888</span></div>
<div class="t" style="left:72.4px;top:608.500px;font-size:12px;line-height:18px;color:#000;">伸出项<span style="letter-spacing:0.299px"> </span>标识<span style="letter-spacing:0.299px">37889</span></div>
<div class="t" style="left:72.4px;top:628.500px;font-size:12px;line-height:18px;color:#000;">伸出项<span style="letter-spacing:0.299px"> </span>标识<span style="letter-spacing:0.299px">37890</span></div>
<div class="t" style="left:72.4px;top:648.500px;font-size:12px;line-height:18px;color:#000;">伸出项<span style="letter-spacing:0.299px"> </span>标识<span style="letter-spacing:0.299px">37891</span></div>
<div class="t" style="left:72.4px;top:668.500px;font-size:12px;line-height:18px;color:#000;">伸出项<span style="letter-spacing:0.299px"> </span>标识<span style="letter-spacing:0.299px">37892</span></div>
<div class="t" style="left:72.4px;top:688.500px;font-size:12px;line-height:18px;color:#000;">伸出项<span style="letter-spacing:0.299px"> </span>标识<span style="letter-spacing:0.299px">37893</span></div>
<div class="t" style="left:72.4px;top:708.500px;font-size:12px;line-height:18px;color:#000;">伸出项<span style="letter-spacing:0.299px"> </span>标识<span style="letter-spacing:0.299px">37894</span></div>
<div class="t" style="left:52.3px;top:728.500px;font-size:12px;line-height:18px;color:#000;">拉伸<span style="letter-spacing:0.146px"> 2</span></div>
<div class="t" style="left:72.4px;top:748.500px;font-size:12px;line-height:18px;color:#000;"><span style="letter-spacing:0.066px">S2D0005</span></div>
<div class="t" style="left:52.3px;top:768.500px;font-size:12px;line-height:18px;color:#000;">镜像<span style="letter-spacing:0.146px"> 1</span></div>
<div class="t" style="left:72.4px;top:788.500px;font-size:12px;line-height:18px;color:#000;">阵列<span style="letter-spacing:0.499px"> 2 (2) / </span>伸出项</div>
<div class="t" style="left:52.3px;top:808.500px;font-size:12px;line-height:18px;color:#000;">拉伸<span style="letter-spacing:0.146px"> 4</span></div>
<div class="t" style="left:72.4px;top:828.500px;font-size:12px;line-height:18px;color:#000;"><span style="letter-spacing:0.066px">S2D0007</span></div>
<div class="t" style="left:52.3px;top:848.500px;font-size:12px;line-height:18px;color:#000;">阵列<span style="letter-spacing:0.612px"> 3 / </span>孔<span style="letter-spacing:0.612px"> 1</span></div>
<div class="t" style="left:72.4px;top:868.500px;font-size:12px;line-height:18px;color:#000;">孔<span style="letter-spacing:0.269px"> 1 [1]</span></div>
<div class="t" style="left:72.4px;top:888.500px;font-size:12px;line-height:18px;color:#000;">孔<span style="letter-spacing:0.269px"> 1 [2]</span></div>
<div class="t" style="left:72.4px;top:908.500px;font-size:12px;line-height:18px;color:#000;">孔<span style="letter-spacing:0.269px"> 1 [3]</span></div>
<div class="t" style="left:72.4px;top:928.500px;font-size:12px;line-height:18px;color:#000;">孔<span style="letter-spacing:0.269px"> 1 [4]</span></div>
<div class="t" style="left:72.4px;top:948.500px;font-size:12px;line-height:18px;color:#000;">孔<span style="letter-spacing:0.269px"> 1 [5]</span></div>
<svg class="i" style="left:0;top:208px" width="279" height="746" viewBox="0 208 279 746"><path d="M21.500 227v740" stroke="#8a8a8a" stroke-width="1" stroke-dasharray="1 1"/><path d="M14.5 213.600l1.500 -1.500h11v10.500l-1.500 1.500z" fill="#111"/><rect x="14.3" y="213.600" width="10.500" height="10.500" fill="#8ffafa" stroke="#3a8a90" stroke-width=".7"/><path d="M22 238.500h11" stroke="#8a8a8a" stroke-width="1" stroke-dasharray="1 1"/><path d="M33.2 242.200l5.600 -8.800h9.200l-5.400 8.800z" fill="none" stroke="#8b4513" stroke-width="1.300"/><path d="M22 258.500h11" stroke="#8a8a8a" stroke-width="1" stroke-dasharray="1 1"/><path d="M33.2 262.200l5.600 -8.800h9.200l-5.400 8.800z" fill="none" stroke="#8b4513" stroke-width="1.300"/><path d="M22 278.500h11" stroke="#8a8a8a" stroke-width="1" stroke-dasharray="1 1"/><path d="M33.2 282.200l5.600 -8.800h9.200l-5.400 8.800z" fill="none" stroke="#8b4513" stroke-width="1.300"/><path d="M22 298.500h11" stroke="#8a8a8a" stroke-width="1" stroke-dasharray="1 1"/><g transform="translate(33 297.600)"><path d="M0 0.800h12M4.100 -5.500l7.600 13.200M11.700 -7.400l-7.600 14.100" stroke="#8b4513" stroke-width="1.200" fill="none"/><path d="M12.300 -1.300l3.400 4.300M15.700 -1.300l-3.400 4.300" stroke="#555" stroke-width="1"/><path d="M0.200 -7.300l2 2.400 2.200 -2.600M2.200 -4.900l-1.600 2.200" stroke="#555" stroke-width=".9" fill="none"/><path d="M0.300 4.800h3.400l-3.600 3.400h3.800" stroke="#555" stroke-width=".9" fill="none"/></g><path d="M22 318.500h11" stroke="#8a8a8a" stroke-width="1" stroke-dasharray="1 1"/><rect x="17.500" y="314.500" width="8" height="8" rx="1.500" fill="#fbfbfb" stroke="#919191" stroke-width="1"/><rect x="18.500" y="319" width="6" height="3" fill="#e4e4e4"/><path d="M19 318.500h5" stroke="#2a3c94" stroke-width="1.200"/><path d="M21.500 316v5" stroke="#2a3c94" stroke-width="1.200"/><path d="M35 319.600h11" stroke="#333" stroke-width=".9"/><path d="M40.500 311.600v15" stroke="#000" stroke-width="1.100" stroke-dasharray="3 1.500 1 1.500"/><circle cx="35.2" cy="319.600" r="1.800" fill="#b8f4f6" stroke="#333" stroke-width=".8"/><circle cx="45.3" cy="319.600" r="2.700" fill="#5fe0e6" stroke="#222" stroke-width=".9"/><path d="M22 338.500h11" stroke="#8a8a8a" stroke-width="1" stroke-dasharray="1 1"/><path d="M33.2 342.200l5.600 -8.800h9.200l-5.400 8.800z" fill="none" stroke="#8b4513" stroke-width="1.300"/><path d="M22 358.500h11" stroke="#8a8a8a" stroke-width="1" stroke-dasharray="1 1"/><rect x="17.500" y="354.500" width="8" height="8" rx="1.500" fill="#fbfbfb" stroke="#919191" stroke-width="1"/><rect x="18.500" y="359" width="6" height="3" fill="#e4e4e4"/><path d="M19 358.500h5" stroke="#2a3c94" stroke-width="1.200"/><path d="M21.500 356v5" stroke="#2a3c94" stroke-width="1.200"/><path d="M34 353.100l1.500 -1.500h12v11l-1.500 1.500z" fill="#a040d0"/><rect x="33.500" y="353.100" width="11.500" height="11" fill="#fbf4ff" stroke="#333" stroke-width=".9"/><path d="M33.500 353.100l1.500 -1.500h12l-1.500 1.500z" fill="#e8c8f4" stroke="#444" stroke-width=".6"/><rect x="36.500" y="356.300" width="1.600" height="1.600" fill="#e010e0"/><rect x="36.500" y="360.300" width="1.600" height="1.600" fill="#e010e0"/><rect x="40.500" y="356.300" width="1.600" height="1.600" fill="#e010e0"/><rect x="40.500" y="360.300" width="1.600" height="1.600" fill="#e010e0"/><path d="M22 378.500h11" stroke="#8a8a8a" stroke-width="1" stroke-dasharray="1 1"/><rect x="17.500" y="374.500" width="8" height="8" rx="1.500" fill="#fbfbfb" stroke="#919191" stroke-width="1"/><rect x="18.500" y="379" width="6" height="3" fill="#e4e4e4"/><path d="M19 378.500h5" stroke="#2a3c94" stroke-width="1.200"/><path d="M35 379.600h11" stroke="#333" stroke-width=".9"/><path d="M40.500 371.600v15" stroke="#000" stroke-width="1.100" stroke-dasharray="3 1.500 1 1.500"/><circle cx="35.2" cy="379.600" r="1.800" fill="#b8f4f6" stroke="#333" stroke-width=".8"/><circle cx="45.3" cy="379.600" r="2.700" fill="#5fe0e6" stroke="#222" stroke-width=".9"/><path d="M41.500 387V398.500" stroke="#8a8a8a" stroke-width="1" stroke-dasharray="1 1"/><path d="M42 398.500h11" stroke="#8a8a8a" stroke-width="1" stroke-dasharray="1 1"/><rect x="53.500" y="394.100" width="12" height="11.500" fill="#c9c6b2" stroke="#1c2f8a" stroke-width="1"/><rect x="53" y="393.600" width="13" height="3" fill="#1c2f8a"/><path d="M56.800 403.100l1 -3.500 8 -7.500 2.500 2.500 -8 7.500z" fill="#f6e23a" stroke="#5a4a10" stroke-width=".6"/><path d="M63.800 394l2 -1.900 2.500 2.500 -2 1.900z" fill="#d02a1a"/><path d="M56.800 403.100l0.500 -1.700 1.200 1.200z" fill="#222"/><path d="M22 418.500h11" stroke="#8a8a8a" stroke-width="1" stroke-dasharray="1 1"/><rect x="17.500" y="414.500" width="8" height="8" rx="1.500" fill="#fbfbfb" stroke="#919191" stroke-width="1"/><rect x="18.500" y="419" width="6" height="3" fill="#e4e4e4"/><path d="M19 418.500h5" stroke="#2a3c94" stroke-width="1.200"/><path d="M35 419.600h11" stroke="#333" stroke-width=".9"/><path d="M40.500 411.600v15" stroke="#000" stroke-width="1.100" stroke-dasharray="3 1.500 1 1.500"/><circle cx="35.2" cy="419.600" r="1.800" fill="#b8f4f6" stroke="#333" stroke-width=".8"/><circle cx="45.3" cy="419.600" r="2.700" fill="#5fe0e6" stroke="#222" stroke-width=".9"/><path d="M41.500 427V438.500" stroke="#8a8a8a" stroke-width="1" stroke-dasharray="1 1"/><path d="M42 438.500h11" stroke="#8a8a8a" stroke-width="1" stroke-dasharray="1 1"/><rect x="53.500" y="434.100" width="12" height="11.500" fill="#c9c6b2" stroke="#1c2f8a" stroke-width="1"/><rect x="53" y="433.600" width="13" height="3" fill="#1c2f8a"/><path d="M56.800 443.100l1 -3.500 8 -7.500 2.500 2.500 -8 7.500z" fill="#f6e23a" stroke="#5a4a10" stroke-width=".6"/><path d="M63.800 434l2 -1.900 2.500 2.500 -2 1.900z" fill="#d02a1a"/><path d="M56.800 443.100l0.500 -1.700 1.200 1.200z" fill="#222"/><path d="M22 458.500h11" stroke="#8a8a8a" stroke-width="1" stroke-dasharray="1 1"/><path d="M33.2 462.200l5.600 -8.800h9.200l-5.400 8.800z" fill="none" stroke="#8b4513" stroke-width="1.300"/><path d="M22 478.500h11" stroke="#8a8a8a" stroke-width="1" stroke-dasharray="1 1"/><path d="M33.2 482.200l5.600 -8.800h9.200l-5.400 8.800z" fill="none" stroke="#8b4513" stroke-width="1.300"/><path d="M22 498.500h11" stroke="#8a8a8a" stroke-width="1" stroke-dasharray="1 1"/><rect x="33.500" y="491.600" width="12.500" height="12" fill="none" stroke="#1a3ae0" stroke-width="1" stroke-dasharray="1 1.500"/><path d="M33.800 501.100c2 -8 9 -8 12 0" fill="none" stroke="#1a5af0" stroke-width="1.500"/><path d="M22 518.500h11" stroke="#8a8a8a" stroke-width="1" stroke-dasharray="1 1"/><rect x="17.500" y="514.500" width="8" height="8" rx="1.500" fill="#fbfbfb" stroke="#919191" stroke-width="1"/><rect x="18.500" y="519" width="6" height="3" fill="#e4e4e4"/><path d="M19 518.500h5" stroke="#2a3c94" stroke-width="1.200"/><path d="M34 513.100l1.500 -1.500h12v11l-1.500 1.500z" fill="#a040d0"/><rect x="33.500" y="513.100" width="11.500" height="11" fill="#fbf4ff" stroke="#333" stroke-width=".9"/><path d="M33.500 513.100l1.500 -1.500h12l-1.500 1.500z" fill="#e8c8f4" stroke="#444" stroke-width=".6"/><rect x="36.500" y="516.300" width="1.600" height="1.600" fill="#e010e0"/><rect x="36.500" y="520.300" width="1.600" height="1.600" fill="#e010e0"/><rect x="40.500" y="516.300" width="1.600" height="1.600" fill="#e010e0"/><rect x="40.500" y="520.300" width="1.600" height="1.600" fill="#e010e0"/><path d="M41.500 527V538.500" stroke="#8a8a8a" stroke-width="1" stroke-dasharray="1 1"/><path d="M42 538.500h11" stroke="#8a8a8a" stroke-width="1" stroke-dasharray="1 1"/><g transform="translate(53 537.600)"><path d="M6 -1.800L0.500 1.200C0 3 0.800 5 2.500 6.600L8.800 8.700L11.800 5.400C8 5 5 3.500 5.200 0.200Z" fill="#9af2f5"/><path d="M2 2.500l3 -1M1.500 4.500l4 -1.500M3 6.500l4.500 -1.500M6 8l4 -1.800" stroke="#2ab8c0" stroke-width=".8"/><path d="M15.500 -6L14.800 -3.600L12 -2.800L6 -1.800L0.500 1.200C0 3 0.800 5 2.500 6.600L8.800 8.700" fill="none" stroke="#333" stroke-width="1"/><path d="M5.500 -0.500C4.500 2.500 7 4.800 11.800 5.400" fill="none" stroke="#333" stroke-width="1"/><path d="M13.300 -3.200l1.700 1.400 1 -1.600" fill="none" stroke="#333" stroke-width=".8"/></g><path d="M41.500 538V558.500" stroke="#8a8a8a" stroke-width="1" stroke-dasharray="1 1"/><path d="M42 558.500h11" stroke="#8a8a8a" stroke-width="1" stroke-dasharray="1 1"/><g transform="translate(53 557.600)"><path d="M6 -1.800L0.500 1.200C0 3 0.800 5 2.500 6.600L8.800 8.700L11.800 5.400C8 5 5 3.500 5.200 0.200Z" fill="#9af2f5"/><path d="M2 2.500l3 -1M1.500 4.500l4 -1.500M3 6.500l4.500 -1.500M6 8l4 -1.800" stroke="#2ab8c0" stroke-width=".8"/><path d="M15.500 -6L14.800 -3.600L12 -2.800L6 -1.800L0.500 1.200C0 3 0.800 5 2.500 6.600L8.800 8.700" fill="none" stroke="#333" stroke-width="1"/><path d="M5.500 -0.500C4.500 2.500 7 4.800 11.800 5.400" fill="none" stroke="#333" stroke-width="1"/><path d="M13.300 -3.200l1.700 1.400 1 -1.600" fill="none" stroke="#333" stroke-width=".8"/></g><path d="M41.500 558V578.500" stroke="#8a8a8a" stroke-width="1" stroke-dasharray="1 1"/><path d="M42 578.500h11" stroke="#8a8a8a" stroke-width="1" stroke-dasharray="1 1"/><g transform="translate(53 577.600)"><path d="M6 -1.800L0.500 1.200C0 3 0.800 5 2.500 6.600L8.800 8.700L11.800 5.400C8 5 5 3.500 5.200 0.200Z" fill="#9af2f5"/><path d="M2 2.500l3 -1M1.500 4.500l4 -1.500M3 6.500l4.500 -1.500M6 8l4 -1.800" stroke="#2ab8c0" stroke-width=".8"/><path d="M15.500 -6L14.800 -3.600L12 -2.800L6 -1.800L0.500 1.200C0 3 0.800 5 2.500 6.600L8.800 8.700" fill="none" stroke="#333" stroke-width="1"/><path d="M5.500 -0.500C4.500 2.500 7 4.800 11.800 5.400" fill="none" stroke="#333" stroke-width="1"/><path d="M13.300 -3.200l1.700 1.400 1 -1.600" fill="none" stroke="#333" stroke-width=".8"/></g><path d="M41.500 578V598.500" stroke="#8a8a8a" stroke-width="1" stroke-dasharray="1 1"/><path d="M42 598.500h11" stroke="#8a8a8a" stroke-width="1" stroke-dasharray="1 1"/><g transform="translate(53 597.600)"><path d="M6 -1.800L0.500 1.200C0 3 0.800 5 2.500 6.600L8.800 8.700L11.800 5.400C8 5 5 3.500 5.200 0.200Z" fill="#9af2f5"/><path d="M2 2.500l3 -1M1.500 4.500l4 -1.500M3 6.500l4.500 -1.500M6 8l4 -1.800" stroke="#2ab8c0" stroke-width=".8"/><path d="M15.500 -6L14.800 -3.600L12 -2.800L6 -1.800L0.500 1.200C0 3 0.800 5 2.500 6.600L8.800 8.700" fill="none" stroke="#333" stroke-width="1"/><path d="M5.500 -0.500C4.500 2.500 7 4.800 11.800 5.400" fill="none" stroke="#333" stroke-width="1"/><path d="M13.300 -3.200l1.700 1.400 1 -1.600" fill="none" stroke="#333" stroke-width=".8"/></g><path d="M41.500 598V618.500" stroke="#8a8a8a" stroke-width="1" stroke-dasharray="1 1"/><path d="M42 618.500h11" stroke="#8a8a8a" stroke-width="1" stroke-dasharray="1 1"/><g transform="translate(53 617.600)"><path d="M6 -1.800L0.500 1.200C0 3 0.800 5 2.500 6.600L8.800 8.700L11.800 5.400C8 5 5 3.500 5.200 0.200Z" fill="#9af2f5"/><path d="M2 2.500l3 -1M1.500 4.500l4 -1.500M3 6.500l4.500 -1.500M6 8l4 -1.800" stroke="#2ab8c0" stroke-width=".8"/><path d="M15.500 -6L14.800 -3.600L12 -2.800L6 -1.800L0.500 1.200C0 3 0.800 5 2.500 6.600L8.800 8.700" fill="none" stroke="#333" stroke-width="1"/><path d="M5.500 -0.500C4.500 2.500 7 4.800 11.800 5.400" fill="none" stroke="#333" stroke-width="1"/><path d="M13.300 -3.200l1.700 1.400 1 -1.600" fill="none" stroke="#333" stroke-width=".8"/></g><path d="M41.500 618V638.500" stroke="#8a8a8a" stroke-width="1" stroke-dasharray="1 1"/><path d="M42 638.500h11" stroke="#8a8a8a" stroke-width="1" stroke-dasharray="1 1"/><g transform="translate(53 637.600)"><path d="M6 -1.800L0.500 1.200C0 3 0.800 5 2.500 6.600L8.800 8.700L11.800 5.400C8 5 5 3.500 5.200 0.200Z" fill="#9af2f5"/><path d="M2 2.500l3 -1M1.500 4.500l4 -1.500M3 6.500l4.500 -1.500M6 8l4 -1.800" stroke="#2ab8c0" stroke-width=".8"/><path d="M15.500 -6L14.800 -3.600L12 -2.800L6 -1.800L0.500 1.200C0 3 0.800 5 2.500 6.600L8.800 8.700" fill="none" stroke="#333" stroke-width="1"/><path d="M5.500 -0.500C4.500 2.500 7 4.800 11.800 5.400" fill="none" stroke="#333" stroke-width="1"/><path d="M13.300 -3.200l1.700 1.400 1 -1.600" fill="none" stroke="#333" stroke-width=".8"/></g><path d="M41.500 638V658.500" stroke="#8a8a8a" stroke-width="1" stroke-dasharray="1 1"/><path d="M42 658.500h11" stroke="#8a8a8a" stroke-width="1" stroke-dasharray="1 1"/><g transform="translate(53 657.600)"><path d="M6 -1.800L0.500 1.200C0 3 0.800 5 2.500 6.600L8.800 8.700L11.800 5.400C8 5 5 3.500 5.200 0.200Z" fill="#9af2f5"/><path d="M2 2.500l3 -1M1.500 4.500l4 -1.500M3 6.500l4.500 -1.500M6 8l4 -1.800" stroke="#2ab8c0" stroke-width=".8"/><path d="M15.500 -6L14.800 -3.600L12 -2.800L6 -1.800L0.500 1.200C0 3 0.800 5 2.500 6.600L8.800 8.700" fill="none" stroke="#333" stroke-width="1"/><path d="M5.500 -0.500C4.500 2.500 7 4.800 11.800 5.400" fill="none" stroke="#333" stroke-width="1"/><path d="M13.300 -3.200l1.700 1.400 1 -1.600" fill="none" stroke="#333" stroke-width=".8"/></g><path d="M41.500 658V678.500" stroke="#8a8a8a" stroke-width="1" stroke-dasharray="1 1"/><path d="M42 678.500h11" stroke="#8a8a8a" stroke-width="1" stroke-dasharray="1 1"/><g transform="translate(53 677.600)"><path d="M6 -1.800L0.500 1.200C0 3 0.800 5 2.500 6.600L8.800 8.700L11.800 5.400C8 5 5 3.500 5.200 0.200Z" fill="#9af2f5"/><path d="M2 2.500l3 -1M1.500 4.500l4 -1.500M3 6.500l4.500 -1.500M6 8l4 -1.800" stroke="#2ab8c0" stroke-width=".8"/><path d="M15.500 -6L14.800 -3.600L12 -2.800L6 -1.800L0.500 1.200C0 3 0.800 5 2.500 6.600L8.800 8.700" fill="none" stroke="#333" stroke-width="1"/><path d="M5.500 -0.500C4.500 2.500 7 4.800 11.800 5.400" fill="none" stroke="#333" stroke-width="1"/><path d="M13.300 -3.200l1.700 1.400 1 -1.600" fill="none" stroke="#333" stroke-width=".8"/></g><path d="M41.500 678V698.500" stroke="#8a8a8a" stroke-width="1" stroke-dasharray="1 1"/><path d="M42 698.500h11" stroke="#8a8a8a" stroke-width="1" stroke-dasharray="1 1"/><g transform="translate(53 697.600)"><path d="M6 -1.800L0.500 1.200C0 3 0.800 5 2.500 6.600L8.800 8.700L11.800 5.400C8 5 5 3.500 5.200 0.200Z" fill="#9af2f5"/><path d="M2 2.500l3 -1M1.500 4.500l4 -1.500M3 6.500l4.500 -1.500M6 8l4 -1.800" stroke="#2ab8c0" stroke-width=".8"/><path d="M15.500 -6L14.800 -3.600L12 -2.800L6 -1.800L0.500 1.200C0 3 0.800 5 2.500 6.600L8.800 8.700" fill="none" stroke="#333" stroke-width="1"/><path d="M5.500 -0.500C4.500 2.500 7 4.800 11.800 5.400" fill="none" stroke="#333" stroke-width="1"/><path d="M13.300 -3.200l1.700 1.400 1 -1.600" fill="none" stroke="#333" stroke-width=".8"/></g><path d="M41.500 698V718.500" stroke="#8a8a8a" stroke-width="1" stroke-dasharray="1 1"/><path d="M42 718.500h11" stroke="#8a8a8a" stroke-width="1" stroke-dasharray="1 1"/><g transform="translate(53 717.600)"><path d="M6 -1.800L0.500 1.200C0 3 0.800 5 2.500 6.600L8.800 8.700L11.800 5.400C8 5 5 3.500 5.200 0.200Z" fill="#9af2f5"/><path d="M2 2.500l3 -1M1.500 4.500l4 -1.500M3 6.500l4.500 -1.500M6 8l4 -1.800" stroke="#2ab8c0" stroke-width=".8"/><path d="M15.500 -6L14.800 -3.600L12 -2.800L6 -1.800L0.500 1.200C0 3 0.800 5 2.500 6.600L8.800 8.700" fill="none" stroke="#333" stroke-width="1"/><path d="M5.500 -0.500C4.500 2.500 7 4.800 11.800 5.400" fill="none" stroke="#333" stroke-width="1"/><path d="M13.300 -3.200l1.700 1.400 1 -1.600" fill="none" stroke="#333" stroke-width=".8"/></g><path d="M22 738.500h11" stroke="#8a8a8a" stroke-width="1" stroke-dasharray="1 1"/><rect x="17.500" y="734.500" width="8" height="8" rx="1.500" fill="#fbfbfb" stroke="#919191" stroke-width="1"/><rect x="18.500" y="739" width="6" height="3" fill="#e4e4e4"/><path d="M19 738.500h5" stroke="#2a3c94" stroke-width="1.200"/><g transform="translate(33 737.600)"><path d="M2 1.500l6.500 -6.500M7.500 7.500l6.500 -6.500" stroke="#555" stroke-width="1" stroke-dasharray="2.200 1.600"/><path d="M9.500 -5.200h5v5z" fill="#a8f4f6"/><path d="M8.500 -5.700h6.300v6.300" fill="none" stroke="#2a2a2a" stroke-width="1.300"/><rect x="1.300" y="1.600" width="6.300" height="6" fill="#8ff6f8" stroke="#777" stroke-width="1"/></g><path d="M41.500 747V758.500" stroke="#8a8a8a" stroke-width="1" stroke-dasharray="1 1"/><path d="M42 758.500h11" stroke="#8a8a8a" stroke-width="1" stroke-dasharray="1 1"/><rect x="53.500" y="754.100" width="12" height="11.500" fill="#c9c6b2" stroke="#1c2f8a" stroke-width="1"/><rect x="53" y="753.600" width="13" height="3" fill="#1c2f8a"/><path d="M56.800 763.100l1 -3.500 8 -7.500 2.500 2.500 -8 7.500z" fill="#f6e23a" stroke="#5a4a10" stroke-width=".6"/><path d="M63.800 754l2 -1.900 2.500 2.500 -2 1.900z" fill="#d02a1a"/><path d="M56.800 763.100l0.500 -1.700 1.200 1.200z" fill="#222"/><path d="M22 778.500h11" stroke="#8a8a8a" stroke-width="1" stroke-dasharray="1 1"/><rect x="17.500" y="774.500" width="8" height="8" rx="1.500" fill="#fbfbfb" stroke="#919191" stroke-width="1"/><rect x="18.500" y="779" width="6" height="3" fill="#e4e4e4"/><path d="M19 778.500h5" stroke="#2a3c94" stroke-width="1.200"/><g transform="translate(33 777.600)"><path d="M8.500 -7v16" stroke="#333" stroke-width="1.100"/><path d="M1.500 -5.500v13" stroke="#d8d0ff" stroke-width="1"/><path d="M15.500 -5.500v13" stroke="#d8d0ff" stroke-width="1"/><path d="M1.500 -5.700c3.500 1.500 5 4 5 7.500v5.700h-5.300" fill="none" stroke="#a020e0" stroke-width="1.100"/><path d="M15.500 -5.700c-3.500 1.500 -5 4 -5 7.500v5.700h5.300" fill="none" stroke="#a020e0" stroke-width="1.100"/></g><path d="M41.500 787V798.500" stroke="#8a8a8a" stroke-width="1" stroke-dasharray="1 1"/><path d="M42 798.500h11" stroke="#8a8a8a" stroke-width="1" stroke-dasharray="1 1"/><rect x="37.500" y="794.500" width="8" height="8" rx="1.500" fill="#fbfbfb" stroke="#919191" stroke-width="1"/><rect x="38.500" y="799" width="6" height="3" fill="#e4e4e4"/><path d="M39 798.500h5" stroke="#2a3c94" stroke-width="1.200"/><path d="M41.500 796v5" stroke="#2a3c94" stroke-width="1.200"/><path d="M54 793.100l1.500 -1.500h12v11l-1.500 1.500z" fill="#a040d0"/><rect x="53.500" y="793.100" width="11.500" height="11" fill="#fbf4ff" stroke="#333" stroke-width=".9"/><path d="M53.500 793.100l1.500 -1.500h12l-1.500 1.500z" fill="#e8c8f4" stroke="#444" stroke-width=".6"/><rect x="56.500" y="796.300" width="1.600" height="1.600" fill="#e010e0"/><rect x="56.500" y="800.300" width="1.600" height="1.600" fill="#e010e0"/><rect x="60.500" y="796.300" width="1.600" height="1.600" fill="#e010e0"/><rect x="60.500" y="800.300" width="1.600" height="1.600" fill="#e010e0"/><path d="M22 818.500h11" stroke="#8a8a8a" stroke-width="1" stroke-dasharray="1 1"/><rect x="17.500" y="814.500" width="8" height="8" rx="1.500" fill="#fbfbfb" stroke="#919191" stroke-width="1"/><rect x="18.500" y="819" width="6" height="3" fill="#e4e4e4"/><path d="M19 818.500h5" stroke="#2a3c94" stroke-width="1.200"/><g transform="translate(33 817.600)"><path d="M2 1.500l6.500 -6.500M7.500 7.500l6.500 -6.500" stroke="#555" stroke-width="1" stroke-dasharray="2.200 1.600"/><path d="M9.500 -5.200h5v5z" fill="#a8f4f6"/><path d="M8.500 -5.700h6.300v6.300" fill="none" stroke="#2a2a2a" stroke-width="1.300"/><rect x="1.300" y="1.600" width="6.300" height="6" fill="#8ff6f8" stroke="#777" stroke-width="1"/></g><path d="M41.500 827V838.500" stroke="#8a8a8a" stroke-width="1" stroke-dasharray="1 1"/><path d="M42 838.500h11" stroke="#8a8a8a" stroke-width="1" stroke-dasharray="1 1"/><rect x="53.500" y="834.100" width="12" height="11.500" fill="#c9c6b2" stroke="#1c2f8a" stroke-width="1"/><rect x="53" y="833.600" width="13" height="3" fill="#1c2f8a"/><path d="M56.800 843.100l1 -3.500 8 -7.500 2.500 2.500 -8 7.500z" fill="#f6e23a" stroke="#5a4a10" stroke-width=".6"/><path d="M63.800 834l2 -1.900 2.500 2.500 -2 1.900z" fill="#d02a1a"/><path d="M56.800 843.100l0.500 -1.700 1.200 1.200z" fill="#222"/><path d="M22 858.500h11" stroke="#8a8a8a" stroke-width="1" stroke-dasharray="1 1"/><rect x="17.500" y="854.500" width="8" height="8" rx="1.500" fill="#fbfbfb" stroke="#919191" stroke-width="1"/><rect x="18.500" y="859" width="6" height="3" fill="#e4e4e4"/><path d="M19 858.500h5" stroke="#2a3c94" stroke-width="1.200"/><path d="M34 853.100l1.500 -1.500h12v11l-1.500 1.500z" fill="#a040d0"/><rect x="33.500" y="853.100" width="11.500" height="11" fill="#fbf4ff" stroke="#333" stroke-width=".9"/><path d="M33.500 853.100l1.500 -1.500h12l-1.500 1.500z" fill="#e8c8f4" stroke="#444" stroke-width=".6"/><rect x="36.500" y="856.300" width="1.600" height="1.600" fill="#e010e0"/><rect x="36.500" y="860.300" width="1.600" height="1.600" fill="#e010e0"/><rect x="40.500" y="856.300" width="1.600" height="1.600" fill="#e010e0"/><rect x="40.500" y="860.300" width="1.600" height="1.600" fill="#e010e0"/><path d="M41.500 867V878.500" stroke="#8a8a8a" stroke-width="1" stroke-dasharray="1 1"/><path d="M42 878.500h11" stroke="#8a8a8a" stroke-width="1" stroke-dasharray="1 1"/><g transform="translate(53 877)"><rect x="0" y="-4" width="16.200" height="12" fill="#93f6f7"/><path d="M0 8l12 -12M4 8l12 -12M0 4l8 -8M8 8l8.200 -8.200M12 8l4.200 -4.200M0 0l4 -4" stroke="#e4fefe" stroke-width="1.100"/><path d="M2.600 -4h10.800v0.400l-3 3.200v5.700h-5.100v-5.700l-2.700 -3.200z" fill="#fff"/><path d="M0 -3.600h2.600l2.700 3.200v5.700h5.100v-5.700l3 -3.200h2.800" fill="none" stroke="#6a6a6a" stroke-width="1"/><path d="M4.500 -3.600h7.500" stroke="#555" stroke-width="1" stroke-dasharray="1.200 1.200"/><rect x="2" y="-4.200" width="1.200" height="1.200" fill="#1a3ab8"/><rect x="4.700" y="-1" width="1.200" height="1.200" fill="#1a3ab8"/><rect x="4.700" y="4.700" width="1.200" height="1.200" fill="#1a3ab8"/><rect x="9.800" y="4.700" width="1.200" height="1.200" fill="#1a3ab8"/><rect x="9.800" y="-1" width="1.200" height="1.200" fill="#1a3ab8"/><rect x="12.800" y="-4.200" width="1.200" height="1.200" fill="#1a3ab8"/></g><path d="M41.500 878V898.500" stroke="#8a8a8a" stroke-width="1" stroke-dasharray="1 1"/><path d="M42 898.500h11" stroke="#8a8a8a" stroke-width="1" stroke-dasharray="1 1"/><g transform="translate(53 897)"><rect x="0" y="-4" width="16.200" height="12" fill="#93f6f7"/><path d="M0 8l12 -12M4 8l12 -12M0 4l8 -8M8 8l8.200 -8.200M12 8l4.200 -4.200M0 0l4 -4" stroke="#e4fefe" stroke-width="1.100"/><path d="M2.600 -4h10.800v0.400l-3 3.200v5.700h-5.100v-5.700l-2.700 -3.200z" fill="#fff"/><path d="M0 -3.600h2.600l2.700 3.200v5.700h5.100v-5.700l3 -3.200h2.800" fill="none" stroke="#6a6a6a" stroke-width="1"/><path d="M4.500 -3.600h7.500" stroke="#555" stroke-width="1" stroke-dasharray="1.200 1.200"/><rect x="2" y="-4.200" width="1.200" height="1.200" fill="#1a3ab8"/><rect x="4.700" y="-1" width="1.200" height="1.200" fill="#1a3ab8"/><rect x="4.700" y="4.700" width="1.200" height="1.200" fill="#1a3ab8"/><rect x="9.800" y="4.700" width="1.200" height="1.200" fill="#1a3ab8"/><rect x="9.800" y="-1" width="1.200" height="1.200" fill="#1a3ab8"/><rect x="12.800" y="-4.200" width="1.200" height="1.200" fill="#1a3ab8"/></g><path d="M41.500 898V918.500" stroke="#8a8a8a" stroke-width="1" stroke-dasharray="1 1"/><path d="M42 918.500h11" stroke="#8a8a8a" stroke-width="1" stroke-dasharray="1 1"/><g transform="translate(53 917)"><rect x="0" y="-4" width="16.200" height="12" fill="#93f6f7"/><path d="M0 8l12 -12M4 8l12 -12M0 4l8 -8M8 8l8.200 -8.200M12 8l4.200 -4.200M0 0l4 -4" stroke="#e4fefe" stroke-width="1.100"/><path d="M2.600 -4h10.800v0.400l-3 3.200v5.700h-5.100v-5.700l-2.700 -3.200z" fill="#fff"/><path d="M0 -3.600h2.600l2.700 3.200v5.700h5.100v-5.700l3 -3.200h2.800" fill="none" stroke="#6a6a6a" stroke-width="1"/><path d="M4.500 -3.600h7.500" stroke="#555" stroke-width="1" stroke-dasharray="1.200 1.200"/><rect x="2" y="-4.200" width="1.200" height="1.200" fill="#1a3ab8"/><rect x="4.700" y="-1" width="1.200" height="1.200" fill="#1a3ab8"/><rect x="4.700" y="4.700" width="1.200" height="1.200" fill="#1a3ab8"/><rect x="9.800" y="4.700" width="1.200" height="1.200" fill="#1a3ab8"/><rect x="9.800" y="-1" width="1.200" height="1.200" fill="#1a3ab8"/><rect x="12.800" y="-4.200" width="1.200" height="1.200" fill="#1a3ab8"/></g><path d="M41.500 918V938.500" stroke="#8a8a8a" stroke-width="1" stroke-dasharray="1 1"/><path d="M42 938.500h11" stroke="#8a8a8a" stroke-width="1" stroke-dasharray="1 1"/><g transform="translate(53 937)"><rect x="0" y="-4" width="16.200" height="12" fill="#93f6f7"/><path d="M0 8l12 -12M4 8l12 -12M0 4l8 -8M8 8l8.200 -8.200M12 8l4.200 -4.200M0 0l4 -4" stroke="#e4fefe" stroke-width="1.100"/><path d="M2.600 -4h10.800v0.400l-3 3.200v5.700h-5.100v-5.700l-2.700 -3.200z" fill="#fff"/><path d="M0 -3.600h2.600l2.700 3.200v5.700h5.100v-5.700l3 -3.200h2.800" fill="none" stroke="#6a6a6a" stroke-width="1"/><path d="M4.500 -3.600h7.500" stroke="#555" stroke-width="1" stroke-dasharray="1.200 1.200"/><rect x="2" y="-4.200" width="1.200" height="1.200" fill="#1a3ab8"/><rect x="4.700" y="-1" width="1.200" height="1.200" fill="#1a3ab8"/><rect x="4.700" y="4.700" width="1.200" height="1.200" fill="#1a3ab8"/><rect x="9.800" y="4.700" width="1.200" height="1.200" fill="#1a3ab8"/><rect x="9.800" y="-1" width="1.200" height="1.200" fill="#1a3ab8"/><rect x="12.800" y="-4.200" width="1.200" height="1.200" fill="#1a3ab8"/></g><path d="M41.500 938V958.500" stroke="#8a8a8a" stroke-width="1" stroke-dasharray="1 1"/><path d="M42 958.500h11" stroke="#8a8a8a" stroke-width="1" stroke-dasharray="1 1"/><g transform="translate(53 957)"><rect x="0" y="-4" width="16.200" height="12" fill="#93f6f7"/><path d="M0 8l12 -12M4 8l12 -12M0 4l8 -8M8 8l8.200 -8.200M12 8l4.200 -4.200M0 0l4 -4" stroke="#e4fefe" stroke-width="1.100"/><path d="M2.600 -4h10.800v0.400l-3 3.200v5.700h-5.100v-5.700l-2.700 -3.200z" fill="#fff"/><path d="M0 -3.600h2.600l2.700 3.200v5.700h5.100v-5.700l3 -3.200h2.800" fill="none" stroke="#6a6a6a" stroke-width="1"/><path d="M4.500 -3.600h7.500" stroke="#555" stroke-width="1" stroke-dasharray="1.200 1.200"/><rect x="2" y="-4.200" width="1.200" height="1.200" fill="#1a3ab8"/><rect x="4.700" y="-1" width="1.200" height="1.200" fill="#1a3ab8"/><rect x="4.700" y="4.700" width="1.200" height="1.200" fill="#1a3ab8"/><rect x="9.800" y="4.700" width="1.200" height="1.200" fill="#1a3ab8"/><rect x="9.800" y="-1" width="1.200" height="1.200" fill="#1a3ab8"/><rect x="12.800" y="-4.200" width="1.200" height="1.200" fill="#1a3ab8"/></g></svg>
<!-- sec_wheel -->
<svg class="i" style="left:312px;top:114px" width="881" height="840" viewBox="312 114 881 840">
<defs><linearGradient id="wbg" gradientUnits="userSpaceOnUse" x1="0" y1="114" x2="0" y2="954"><stop offset="0" stop-color="#a19f92"/><stop offset=".3" stop-color="#b4b2a5"/><stop offset=".62" stop-color="#c9c6b9"/><stop offset=".88" stop-color="#d9d6ca"/><stop offset="1" stop-color="#dedbcf"/></linearGradient><linearGradient id="gtread" gradientUnits="userSpaceOnUse" x1="760" y1="230" x2="800" y2="890"><stop offset="0" stop-color="#a5afb5"/><stop offset=".35" stop-color="#a7b1b7"/><stop offset=".55" stop-color="#9aa4aa"/><stop offset=".72" stop-color="#7f898f"/><stop offset=".86" stop-color="#60696e"/><stop offset="1" stop-color="#596166"/></linearGradient><linearGradient id="gside" gradientUnits="userSpaceOnUse" x1="0" y1="240" x2="0" y2="880"><stop offset="0" stop-color="#929ca2"/><stop offset=".25" stop-color="#8a949a"/><stop offset=".7" stop-color="#848e94"/><stop offset="1" stop-color="#7a848a"/></linearGradient><linearGradient id="gcrease" gradientUnits="userSpaceOnUse" x1="0" y1="280" x2="0" y2="520"><stop offset="0" stop-color="#3f4549" stop-opacity="1"/><stop offset=".35" stop-color="#42484c" stop-opacity=".9"/><stop offset=".75" stop-color="#4a5156" stop-opacity=".35"/><stop offset="1" stop-color="#4a5156" stop-opacity="0"/></linearGradient><linearGradient id="gleft" gradientUnits="userSpaceOnUse" x1="0" y1="300" x2="0" y2="420"><stop offset="0" stop-color="#a5afb5"/><stop offset="1" stop-color="#69727a"/></linearGradient><linearGradient id="gouter" gradientUnits="userSpaceOnUse" x1="800" y1="330" x2="560" y2="780"><stop offset="0" stop-color="#5f686e" stop-opacity="0"/><stop offset=".42" stop-color="#5f686e" stop-opacity="0"/><stop offset=".62" stop-color="#555d62" stop-opacity=".95"/><stop offset="1" stop-color="#525a5f" stop-opacity="1"/></linearGradient><linearGradient id="gblend" gradientUnits="userSpaceOnUse" x1="640" y1="0" x2="800" y2="0"><stop offset="0" stop-color="#a0aab0" stop-opacity="0"/><stop offset="1" stop-color="#a0aab0" stop-opacity=".95"/></linearGradient><linearGradient id="glight" gradientUnits="userSpaceOnUse" x1="0" y1="240" x2="0" y2="880"><stop offset="0" stop-color="#a9b3b9" stop-opacity=".9"/><stop offset=".3" stop-color="#a3adb3" stop-opacity=".8"/><stop offset=".8" stop-color="#a0aab0" stop-opacity=".75"/><stop offset="1" stop-color="#8f999f" stop-opacity=".5"/></linearGradient><linearGradient id="gcres" gradientUnits="userSpaceOnUse" x1="600" y1="315" x2="650" y2="800"><stop offset="0" stop-color="#464c51"/><stop offset=".06" stop-color="#4b5257"/><stop offset=".15" stop-color="#7a848a"/><stop offset=".3" stop-color="#a0acb3"/><stop offset=".55" stop-color="#b3bfc7"/><stop offset=".85" stop-color="#bcc8cf"/><stop offset="1" stop-color="#adb9c0"/></linearGradient><filter id="b2" x="-20%" y="-20%" width="140%" height="140%"><feGaussianBlur stdDeviation="2"/></filter><filter id="b4" x="-20%" y="-20%" width="140%" height="140%"><feGaussianBlur stdDeviation="4"/></filter><filter id="b6" x="-20%" y="-20%" width="140%" height="140%"><feGaussianBlur stdDeviation="6"/></filter><filter id="b12" x="-40%" y="-40%" width="180%" height="180%"><feGaussianBlur stdDeviation="12"/></filter><clipPath id="cSIL"><path d="M659.4 216.600L668.6 215.700L677.7 215.600L686.6 216.0L695.4 217.100L703.8 218.700L711.9 220.900L719.7 223.500L727.3 226.500L734.5 229.900L741.5 233.700L748.2 237.800L754.8 242.300L761.1 247.0L767.3 252.100L773.3 257.500L779.2 263.300L785.0 269.300L790.6 275.600L796.0 282.200L801.4 289.0L806.6 296.200L811.7 303.600L816.7 311.300L821.6 319.300L826.3 327.500L830.9 335.900L835.3 344.600L839.7 353.500L843.8 362.600L847.9 372.0L851.8 381.500L855.5 391.200L859.1 401.100L862.6 411.200L865.9 421.400L869.0 431.800L872.0 442.300L874.8 452.900L877.4 463.700L879.9 474.500L882.2 485.400L884.3 496.400L886.2 507.500L887.9 518.600L889.5 529.800L890.9 540.900L892.1 552.100L893.1 563.300L893.9 574.500L894.5 585.600L894.9 596.700L895.2 607.800L895.2 618.800L895.1 629.700L894.7 640.500L894.2 651.200L893.5 661.900L892.6 672.400L891.5 682.700L890.1 692.900L888.7 703.0L887.0 712.900L885.1 722.600L883.0 732.200L880.8 741.500L878.4 750.700L875.7 759.600L872.9 768.300L869.9 776.800L866.7 785.100L863.3 793.100L859.7 800.900L855.9 808.400L852.0 815.700L847.8 822.800L843.3 829.500L838.7 836.100L833.8 842.300L828.6 848.300L823.2 854.100L817.4 859.500L811.3 864.700L804.8 869.600L797.9 874.100L790.6 878.300L782.9 882.0L774.7 885.300L766.2 888.100L757.4 890.300L748.3 891.800L739.2 892.600L730.1 892.800L721.1 892.400L712.4 891.300L704.0 889.700L695.9 887.500L688.0 884.900L680.5 881.900L673.3 878.500L666.3 874.700L659.5 870.600L653.0 866.100L646.6 861.400L640.5 856.300L634.4 850.800L628.6 845.100L622.8 839.100L617.2 832.800L611.7 826.200L606.4 819.400L601.2 812.200L596.1 804.800L591.1 797.100L585.5 787.500L580.6 777.800L576.2 767.900L572.5 757.900L568.3 749.400L564.3 740.600L560.4 731.700L556.7 722.500L553.0 713.100L549.6 703.500L546.2 693.800L543.0 683.800L540.0 673.800L537.1 663.600L534.4 653.200L531.8 642.800L529.4 632.200L527.2 621.600L525.2 610.900L523.3 600.100L521.6 589.300L520.1 578.400L518.7 567.500L517.6 556.600L516.6 545.700L515.8 534.800L515.2 524.0L514.8 513.200L514.5 502.400L514.5 491.700L514.6 481.100L514.9 470.600L515.5 460.200L516.2 449.900L517.1 439.800L518.1 429.800L518.5 418.800L519.3 407.800L520.7 396.800L522.7 385.800L524.7 376.200L527.0 366.900L529.4 357.700L532.1 348.800L534.9 340.100L537.9 331.600L541.1 323.300L544.5 315.300L548.1 307.500L551.8 300.0L555.8 292.700L560.0 285.600L564.4 278.800L569.1 272.300L574.0 266.100L579.2 260.100L584.6 254.300L590.4 248.900L596.5 243.700L603.0 238.800L609.8 234.300L617.1 230.100L624.9 226.400L633.0 223.100L641.6 220.300L650.4 218.100Z"/></clipPath><clipPath id="cE2"><path d="M650.8 315.100L658.8 314.600L667.1 315.300L675.3 317.200L683.7 320.300L692.0 324.500L700.2 329.800L708.4 336.300L716.5 343.800L724.4 352.400L732.1 362.0L739.5 372.500L746.7 383.900L753.5 396.100L760.1 409.200L766.2 422.900L771.9 437.400L777.2 452.400L782.0 467.900L786.4 483.800L790.2 500.100L793.5 516.700L796.3 533.400L798.5 550.300L800.2 567.200L801.3 584.100L801.8 600.800L801.7 617.400L801.1 633.600L799.8 649.500L798.0 664.900L795.7 679.700L792.8 694.0L789.3 707.600L785.3 720.500L780.9 732.600L775.9 743.800L770.5 754.100L764.7 763.500L758.4 771.800L751.8 779.100L744.9 785.400L737.6 790.500L730.1 794.500L722.4 797.300L714.4 798.900L706.4 799.400L698.1 798.700L689.9 796.800L681.5 793.700L673.2 789.500L665.0 784.200L656.8 777.700L648.7 770.200L640.8 761.600L633.1 752.0L625.7 741.500L618.5 730.100L611.7 717.900L605.1 704.800L599.0 691.100L593.3 676.600L588.0 661.600L583.2 646.100L578.8 630.200L575.0 613.900L571.7 597.300L568.9 580.600L566.7 563.700L565.0 546.800L563.9 529.900L563.4 513.200L563.5 496.600L564.1 480.400L565.4 464.500L567.2 449.100L569.5 434.300L572.4 420.0L575.9 406.400L579.9 393.500L584.3 381.400L589.3 370.200L594.7 359.900L600.5 350.500L606.8 342.200L613.4 334.900L620.3 328.600L627.6 323.500L635.1 319.500L642.8 316.700Z"/></clipPath><clipPath id="cE3"><path d="M692.8 310.600L700.8 310.100L709.0 310.800L717.2 312.700L725.5 315.700L733.8 319.900L742.0 325.300L750.2 331.700L758.2 339.200L766.1 347.700L773.7 357.200L781.2 367.700L788.3 379.100L795.1 391.300L801.6 404.300L807.7 418.0L813.4 432.300L818.7 447.300L823.5 462.700L827.8 478.600L831.7 494.800L835.0 511.300L837.7 528.0L840.0 544.800L841.6 561.700L842.7 578.500L843.2 595.200L843.1 611.600L842.5 627.800L841.2 643.600L839.4 658.900L837.1 673.700L834.2 687.900L830.7 701.500L826.8 714.300L822.3 726.400L817.4 737.500L812.0 747.800L806.2 757.100L800.0 765.500L793.4 772.700L786.5 778.900L779.3 784.0L771.8 788.0L764.1 790.800L756.2 792.400L748.1 792.900L740.0 792.200L731.7 790.300L723.4 787.200L715.1 783.0L706.9 777.700L698.8 771.300L690.7 763.800L682.9 755.300L675.2 745.700L667.8 735.300L660.7 723.900L653.8 711.700L647.3 698.700L641.2 685.0L635.5 670.600L630.3 655.700L625.4 640.300L621.1 624.400L617.3 608.200L614.0 591.700L611.2 575.0L609.0 558.100L607.4 541.300L606.3 524.500L605.8 507.800L605.8 491.400L606.5 475.200L607.7 459.400L609.5 444.100L611.9 429.300L614.8 415.0L618.2 401.500L622.2 388.600L626.6 376.600L631.6 365.400L636.9 355.200L642.7 345.800L649.0 337.500L655.5 330.200L662.4 324.100L669.7 319.0L677.1 315.0L684.9 312.200Z"/></clipPath><clipPath id="cRING"><path clip-rule="evenodd" d="M627.2 248.100L637.6 247.500L648.1 248.400L658.8 250.800L669.5 254.800L680.2 260.200L690.8 267.100L701.3 275.300L711.7 285.0L721.8 296.0L731.7 308.300L741.2 321.800L750.5 336.500L759.3 352.200L767.6 369.0L775.5 386.700L782.9 405.200L789.7 424.500L795.9 444.400L801.5 464.900L806.4 485.800L810.7 507.100L814.2 528.600L817.1 550.300L819.2 572.100L820.6 593.700L821.3 615.200L821.2 636.500L820.3 657.300L818.8 677.700L816.4 697.500L813.4 716.600L809.7 734.900L805.2 752.400L800.1 769.0L794.4 784.500L788.0 798.900L781.1 812.200L773.6 824.200L765.5 834.900L757.1 844.300L748.1 852.300L738.8 858.900L729.2 864.0L719.2 867.600L709.0 869.700L698.6 870.300L688.1 869.400L677.4 867.0L666.8 863.0L656.1 857.600L645.4 850.800L634.9 842.500L624.6 832.800L614.4 821.800L604.6 809.500L595.0 796.0L585.8 781.300L577.0 765.600L568.6 748.800L560.7 731.100L553.4 712.600L546.6 693.400L540.3 673.400L534.8 653.0L529.8 632.0L525.6 610.700L522.0 589.200L519.1 567.500L517.0 545.700L515.6 524.100L515.0 502.600L515.1 481.300L515.9 460.500L517.5 440.100L519.8 420.300L522.8 401.200L526.6 382.900L531.0 365.400L536.1 348.800L541.9 333.300L548.2 318.900L555.2 305.600L562.7 293.600L570.7 282.900L579.2 273.500L588.1 265.500L597.4 258.900L607.0 253.800L617.0 250.200Z M650.8 315.100L658.8 314.600L667.1 315.300L675.3 317.200L683.7 320.300L692.0 324.500L700.2 329.800L708.4 336.300L716.5 343.800L724.4 352.400L732.1 362.0L739.5 372.500L746.7 383.900L753.5 396.100L760.1 409.200L766.2 422.900L771.9 437.400L777.2 452.400L782.0 467.900L786.4 483.800L790.2 500.100L793.5 516.700L796.3 533.400L798.5 550.300L800.2 567.200L801.3 584.100L801.8 600.800L801.7 617.400L801.1 633.600L799.8 649.500L798.0 664.900L795.7 679.700L792.8 694.0L789.3 707.600L785.3 720.500L780.9 732.600L775.9 743.800L770.5 754.100L764.7 763.500L758.4 771.800L751.8 779.100L744.9 785.400L737.6 790.500L730.1 794.500L722.4 797.300L714.4 798.900L706.4 799.400L698.1 798.700L689.9 796.800L681.5 793.700L673.2 789.500L665.0 784.200L656.8 777.700L648.7 770.200L640.8 761.600L633.1 752.0L625.7 741.500L618.5 730.100L611.7 717.900L605.1 704.800L599.0 691.100L593.3 676.600L588.0 661.600L583.2 646.100L578.8 630.200L575.0 613.900L571.7 597.300L568.9 580.600L566.7 563.700L565.0 546.800L563.9 529.900L563.4 513.200L563.5 496.600L564.1 480.400L565.4 464.500L567.2 449.100L569.5 434.300L572.4 420.0L575.9 406.400L579.9 393.500L584.3 381.400L589.3 370.200L594.7 359.900L600.5 350.500L606.8 342.200L613.4 334.900L620.3 328.600L627.6 323.500L635.1 319.500L642.8 316.700Z"/></clipPath><clipPath id="cTREAD"><path clip-rule="evenodd" d="M659.4 216.600L668.6 215.700L677.7 215.600L686.6 216.0L695.4 217.100L703.8 218.700L711.9 220.900L719.7 223.500L727.3 226.500L734.5 229.900L741.5 233.700L748.2 237.800L754.8 242.300L761.1 247.0L767.3 252.100L773.3 257.500L779.2 263.300L785.0 269.300L790.6 275.600L796.0 282.200L801.4 289.0L806.6 296.200L811.7 303.600L816.7 311.300L821.6 319.300L826.3 327.500L830.9 335.900L835.3 344.600L839.7 353.500L843.8 362.600L847.9 372.0L851.8 381.500L855.5 391.200L859.1 401.100L862.6 411.200L865.9 421.400L869.0 431.800L872.0 442.300L874.8 452.900L877.4 463.700L879.9 474.500L882.2 485.400L884.3 496.400L886.2 507.500L887.9 518.600L889.5 529.800L890.9 540.900L892.1 552.100L893.1 563.300L893.9 574.500L894.5 585.600L894.9 596.700L895.2 607.800L895.2 618.800L895.1 629.700L894.7 640.500L894.2 651.200L893.5 661.900L892.6 672.400L891.5 682.700L890.1 692.900L888.7 703.0L887.0 712.900L885.1 722.600L883.0 732.200L880.8 741.500L878.4 750.700L875.7 759.600L872.9 768.300L869.9 776.800L866.7 785.100L863.3 793.100L859.7 800.900L855.9 808.400L852.0 815.700L847.8 822.800L843.3 829.500L838.7 836.100L833.8 842.300L828.6 848.300L823.2 854.100L817.4 859.500L811.3 864.700L804.8 869.600L797.9 874.100L790.6 878.300L782.9 882.0L774.7 885.300L766.2 888.100L757.4 890.300L748.3 891.800L739.2 892.600L730.1 892.800L721.1 892.400L712.4 891.300L704.0 889.700L695.9 887.500L688.0 884.900L680.5 881.900L673.3 878.500L666.3 874.700L659.5 870.600L653.0 866.100L646.6 861.400L640.5 856.300L634.4 850.800L628.6 845.100L622.8 839.100L617.2 832.800L611.7 826.200L606.4 819.400L601.2 812.200L596.1 804.800L591.1 797.100L585.5 787.500L580.6 777.800L576.2 767.900L572.5 757.900L568.3 749.400L564.3 740.600L560.4 731.700L556.7 722.500L553.0 713.100L549.6 703.500L546.2 693.800L543.0 683.800L540.0 673.800L537.1 663.600L534.4 653.200L531.8 642.800L529.4 632.200L527.2 621.600L525.2 610.900L523.3 600.100L521.6 589.300L520.1 578.400L518.7 567.500L517.6 556.600L516.6 545.700L515.8 534.800L515.2 524.0L514.8 513.200L514.5 502.400L514.5 491.700L514.6 481.100L514.9 470.600L515.5 460.200L516.2 449.900L517.1 439.800L518.1 429.800L518.5 418.800L519.3 407.800L520.7 396.800L522.7 385.800L524.7 376.200L527.0 366.900L529.4 357.700L532.1 348.800L534.9 340.100L537.9 331.600L541.1 323.300L544.5 315.300L548.1 307.500L551.8 300.0L555.8 292.700L560.0 285.600L564.4 278.800L569.1 272.300L574.0 266.100L579.2 260.100L584.6 254.300L590.4 248.900L596.5 243.700L603.0 238.800L609.8 234.300L617.1 230.100L624.9 226.400L633.0 223.100L641.6 220.300L650.4 218.100Z M627.2 248.100L637.6 247.500L648.1 248.400L658.8 250.800L669.5 254.800L680.2 260.200L690.8 267.100L701.3 275.300L711.7 285.0L721.8 296.0L731.7 308.300L741.2 321.800L750.5 336.500L759.3 352.200L767.6 369.0L775.5 386.700L782.9 405.200L789.7 424.500L795.9 444.400L801.5 464.900L806.4 485.800L810.7 507.100L814.2 528.600L817.1 550.300L819.2 572.100L820.6 593.700L821.3 615.200L821.2 636.500L820.3 657.300L818.8 677.700L816.4 697.500L813.4 716.600L809.7 734.900L805.2 752.400L800.1 769.0L794.4 784.500L788.0 798.900L781.1 812.200L773.6 824.200L765.5 834.900L757.1 844.300L748.1 852.300L738.8 858.900L729.2 864.0L719.2 867.600L709.0 869.700L698.6 870.300L688.1 869.400L677.4 867.0L666.8 863.0L656.1 857.600L645.4 850.800L634.9 842.500L624.6 832.800L614.4 821.800L604.6 809.500L595.0 796.0L585.8 781.300L577.0 765.600L568.6 748.800L560.7 731.100L553.4 712.600L546.6 693.400L540.3 673.400L534.8 653.0L529.8 632.0L525.6 610.700L522.0 589.200L519.1 567.500L517.0 545.700L515.6 524.100L515.0 502.600L515.1 481.300L515.9 460.500L517.5 440.100L519.8 420.300L522.8 401.200L526.6 382.900L531.0 365.400L536.1 348.800L541.9 333.300L548.2 318.900L555.2 305.600L562.7 293.600L570.7 282.900L579.2 273.500L588.1 265.500L597.4 258.900L607.0 253.800L617.0 250.200Z"/></clipPath></defs>
<path d="M659.4 216.600L668.6 215.700L677.7 215.600L686.6 216.0L695.4 217.100L703.8 218.700L711.9 220.900L719.7 223.500L727.3 226.500L734.5 229.900L741.5 233.700L748.2 237.800L754.8 242.300L761.1 247.0L767.3 252.100L773.3 257.500L779.2 263.300L785.0 269.300L790.6 275.600L796.0 282.200L801.4 289.0L806.6 296.200L811.7 303.600L816.7 311.300L821.6 319.300L826.3 327.500L830.9 335.900L835.3 344.600L839.7 353.500L843.8 362.600L847.9 372.0L851.8 381.500L855.5 391.200L859.1 401.100L862.6 411.200L865.9 421.400L869.0 431.800L872.0 442.300L874.8 452.900L877.4 463.700L879.9 474.500L882.2 485.400L884.3 496.400L886.2 507.500L887.9 518.600L889.5 529.800L890.9 540.900L892.1 552.100L893.1 563.300L893.9 574.500L894.5 585.600L894.9 596.700L895.2 607.800L895.2 618.800L895.1 629.700L894.7 640.500L894.2 651.200L893.5 661.900L892.6 672.400L891.5 682.700L890.1 692.900L888.7 703.0L887.0 712.900L885.1 722.600L883.0 732.200L880.8 741.500L878.4 750.700L875.7 759.600L872.9 768.300L869.9 776.800L866.7 785.100L863.3 793.100L859.7 800.900L855.9 808.400L852.0 815.700L847.8 822.800L843.3 829.500L838.7 836.100L833.8 842.300L828.6 848.300L823.2 854.100L817.4 859.500L811.3 864.700L804.8 869.600L797.9 874.100L790.6 878.300L782.9 882.0L774.7 885.300L766.2 888.100L757.4 890.300L748.3 891.800L739.2 892.600L730.1 892.800L721.1 892.400L712.4 891.300L704.0 889.700L695.9 887.500L688.0 884.900L680.5 881.900L673.3 878.500L666.3 874.700L659.5 870.600L653.0 866.100L646.6 861.400L640.5 856.300L634.4 850.800L628.6 845.100L622.8 839.100L617.2 832.800L611.7 826.200L606.4 819.400L601.2 812.200L596.1 804.800L591.1 797.100L585.5 787.500L580.6 777.800L576.2 767.900L572.5 757.900L568.3 749.400L564.3 740.600L560.4 731.700L556.7 722.500L553.0 713.100L549.6 703.500L546.2 693.800L543.0 683.800L540.0 673.800L537.1 663.600L534.4 653.200L531.8 642.800L529.4 632.200L527.2 621.600L525.2 610.900L523.3 600.100L521.6 589.300L520.1 578.400L518.7 567.500L517.6 556.600L516.6 545.700L515.8 534.800L515.2 524.0L514.8 513.200L514.5 502.400L514.5 491.700L514.6 481.100L514.9 470.600L515.5 460.200L516.2 449.900L517.1 439.800L518.1 429.800L518.5 418.800L519.3 407.800L520.7 396.800L522.7 385.800L524.7 376.200L527.0 366.900L529.4 357.700L532.1 348.800L534.9 340.100L537.9 331.600L541.1 323.300L544.5 315.300L548.1 307.500L551.8 300.0L555.8 292.700L560.0 285.600L564.4 278.800L569.1 272.300L574.0 266.100L579.2 260.100L584.6 254.300L590.4 248.900L596.5 243.700L603.0 238.800L609.8 234.300L617.1 230.100L624.9 226.400L633.0 223.100L641.6 220.300L650.4 218.100Z" fill="url(#gtread)"/>
<g clip-path="url(#cSIL)">
<path d="M746.1 245.800L762.9 262.100L779.0 281.500L794.5 304.0L809.0 329.200L822.4 356.800L834.6 386.600L845.4 418.200L854.8 451.300L862.5 485.600L868.6 520.500L873.0 555.900L875.5 591.200L876.3 626.100" fill="none" stroke="#d2dde3" stroke-width="15" filter="url(#b6)" opacity=".9"/>
<path d="M790.8 304.200L805.4 329.400L818.8 357.100L831.0 386.900L841.8 418.600L851.2 451.700L859.0 486.0L865.1 521.0L869.4 556.400L872.0 591.700" fill="none" stroke="#e4eff5" stroke-width="7" filter="url(#b4)" opacity=".85"/>
<path d="M748.0 239.200L764.5 250.500L780.8 265.100L796.5 282.800L811.6 303.400L825.8 326.700L839.0 352.400L851.1 380.400L861.9 410.100L871.4 441.500L879.4 474.0L885.7 507.300L890.5 541.100L893.5 575.0L894.8 608.700L894.4 641.600L892.2 673.600L888.3 704.300L882.7 733.200L875.5 760.100" fill="none" stroke="#7f898f" stroke-width="8" filter="url(#b4)" opacity=".6"/>
<path d="M704.9 874.800L694.3 874.600L683.5 872.900L672.7 869.700L661.9 865.0L651.0 858.700L640.3 851.0L629.7 841.900L619.3 831.400L609.1 819.600L599.3 806.500L589.7 792.200L580.6 776.700L571.8 760.200L563.6 742.700L555.9 724.400L548.7 705.200L542.1 685.300L536.1 664.800L530.7 643.700L526.1 622.300L522.1 600.500L518.8 578.600L516.3 556.500L514.5 534.500L513.5 512.500L513.2 490.800L513.6 469.500L514.9 448.500L516.9 428.200L519.6 408.400L523.0 389.400L527.2 371.200" fill="none" stroke="url(#gleft)" stroke-width="14"/>
</g>
<g clip-path="url(#cTREAD)"><g fill="none" stroke-linecap="butt"><path d="M630.9 247.700L631.7 243.800L633.3 239.800L635.6 235.900L638.6 232.200L642.3 228.700L646.6 225.500L651.4 222.700L656.7 220.300L662.3 218.400L668.2 217.0" stroke="#bcc7ce" stroke-width="2.600" opacity="0.60"/><path d="M633.2 247.600L634.0 243.700L635.6 239.700L637.9 235.900L640.9 232.200L644.6 228.700L649.0 225.600L653.8 222.800L659.1 220.400L664.7 218.500L670.6 217.100" stroke="#474d52" stroke-width="2.4" opacity="0.85"/><path d="M633.3 245.200L628.6 245.500" stroke="#50575c" stroke-width="3.800" opacity="0.95"/><path d="M644.0 247.900L645.0 244.100L646.8 240.300L649.2 236.600L652.4 233.100L656.2 229.800L660.6 226.800L665.6 224.100L670.9 221.900L676.6 220.100L682.6 218.900" stroke="#bcc7ce" stroke-width="2.600" opacity="0.60"/><path d="M689.3 217.200L693.6 217.0" stroke="#bcc7ce" stroke-width="2.6" opacity="0.55"/><path d="M646.3 248.100L647.3 244.400L649.1 240.700L651.6 237.0L654.7 233.500L658.6 230.200L663.0 227.200L668.0 224.600L673.4 222.400L679.1 220.700L685.0 219.500" stroke="#474d52" stroke-width="2.4" opacity="0.85"/><path d="M691.7 217.700L696.0 217.500L700.2 218.0" stroke="#474d52" stroke-width="2.2" opacity="0.95"/><path d="M646.5 245.800L641.7 245.300" stroke="#50575c" stroke-width="3.800" opacity="0.95"/><path d="M657.3 250.400L658.5 246.800L660.4 243.300L663.0 239.800L666.3 236.400L670.3 233.300L674.8 230.500L679.9 228.0L685.3 226.0L691.1 224.400L697.0 223.400" stroke="#bcc7ce" stroke-width="2.600" opacity="0.60"/><path d="M703.7 221.300L708.0 221.0L712.1 221.300L716.0 222.100" stroke="#bcc7ce" stroke-width="2.6" opacity="0.55"/><path d="M659.6 251.100L660.8 247.500L662.7 244.0L665.4 240.500L668.7 237.200L672.7 234.200L677.2 231.400L682.3 229.0L687.8 227.0L693.5 225.400L699.5 224.400" stroke="#474d52" stroke-width="2.4" opacity="0.85"/><path d="M706.2 222.300L710.5 222.0L714.6 222.200L718.4 223.0" stroke="#474d52" stroke-width="2.2" opacity="0.95"/><path d="M659.9 248.800L655.1 247.500" stroke="#50575c" stroke-width="3.800" opacity="0.95"/><path d="M670.7 255.300L672.0 252.0L674.1 248.600L676.8 245.300L680.3 242.200L684.4 239.300L689.1 236.700L694.2 234.500L699.7 232.700L705.5 231.300L711.5 230.400" stroke="#bcc7ce" stroke-width="2.600" opacity="0.60"/><path d="M718.2 228.0L722.5 227.500L726.6 227.600L730.3 228.300L733.7 229.500" stroke="#bcc7ce" stroke-width="2.6" opacity="0.55"/><path d="M673.0 256.400L674.3 253.100L676.4 249.700L679.2 246.500L682.7 243.400L686.8 240.600L691.5 238.0L696.6 235.800L702.2 234.0L708.0 232.700L714.0 231.800" stroke="#474d52" stroke-width="2.4" opacity="0.85"/><path d="M720.7 229.400L725.0 228.900L729.0 229.0L732.8 229.600L736.1 230.800" stroke="#474d52" stroke-width="2.2" opacity="0.95"/><path d="M673.4 254.200L668.5 252.0" stroke="#50575c" stroke-width="3.800" opacity="0.95"/><path d="M736.1 229.100L735.5 234.600L751.6 240.0L751.7 238.500Z" fill="url(#wbg)" stroke="none"/><path d="M720.5 228.500L724.8 231.100" stroke="#4d5459" stroke-width="3" opacity=".9"/><path d="M684.0 262.500L685.5 259.400L687.7 256.300L690.6 253.300L694.2 250.400L698.5 247.700L703.2 245.400L708.4 243.400L714.0 241.700L719.9 240.600L725.9 239.900" stroke="#bcc7ce" stroke-width="2.600" opacity="0.60"/><path d="M732.7 237.200L736.9 236.500L740.9 236.400L744.6 236.900L747.9 237.900" stroke="#bcc7ce" stroke-width="2.6" opacity="0.55"/><path d="M686.3 264.0L687.8 260.900L690.0 257.800L693.0 254.800L696.6 252.0L700.8 249.400L705.6 247.100L710.9 245.100L716.5 243.500L722.3 242.400L728.4 241.700" stroke="#474d52" stroke-width="2.4" opacity="0.85"/><path d="M735.1 239.0L739.3 238.300L743.4 238.200L747.0 238.600L750.3 239.600" stroke="#474d52" stroke-width="2.2" opacity="0.95"/><path d="M686.8 261.900L682.0 258.900" stroke="#50575c" stroke-width="3.800" opacity="0.95"/><path d="M752.4 239.0L751.6 244.400L766.7 251.600L766.9 250.100Z" fill="url(#wbg)" stroke="none"/><path d="M734.9 237.800L739.2 241.100" stroke="#4d5459" stroke-width="3" opacity=".9"/><path d="M697.2 272.0L698.9 269.100L701.2 266.300L704.3 263.500L708.0 260.900L712.4 258.500L717.2 256.400L722.5 254.600L728.2 253.200L734.1 252.300L740.1 251.800" stroke="#bcc7ce" stroke-width="2.600" opacity="0.60"/><path d="M746.9 248.700L751.1 247.900L755.1 247.600L758.7 247.900L761.9 248.700L764.6 250.0" stroke="#bcc7ce" stroke-width="2.6" opacity="0.55"/><path d="M699.5 273.800L701.1 271.0L703.5 268.200L706.6 265.500L710.4 262.900L714.7 260.600L719.6 258.500L724.9 256.800L730.6 255.400L736.5 254.500L742.5 254.0" stroke="#474d52" stroke-width="2.4" opacity="0.85"/><path d="M749.3 250.900L753.5 250.100L757.5 249.800L761.1 250.0L764.3 250.800L766.9 252.0" stroke="#474d52" stroke-width="2.2" opacity="0.95"/><path d="M700.1 271.900L695.3 268.0" stroke="#50575c" stroke-width="3.800" opacity="0.95"/><path d="M767.7 250.700L766.5 256.100L781.0 265.100L781.3 263.600Z" fill="url(#wbg)" stroke="none"/><path d="M749.1 249.600L753.3 253.500" stroke="#4d5459" stroke-width="3" opacity=".9"/><path d="M710.2 283.600L712.0 281.100L714.5 278.500L717.7 276.0L721.6 273.700L726.0 271.600L730.9 269.700L736.3 268.200L742.0 267.0L748.0 266.300L754.0 266.0" stroke="#bcc7ce" stroke-width="2.600" opacity="0.60"/><path d="M760.8 262.600L765.1 261.600L769.0 261.200L772.6 261.200L775.7 261.800L778.3 262.800" stroke="#bcc7ce" stroke-width="2.6" opacity="0.55"/><path d="M712.4 285.800L714.2 283.300L716.7 280.800L720.0 278.400L723.8 276.100L728.3 274.0L733.2 272.200L738.6 270.700L744.3 269.600L750.3 268.900L756.3 268.600" stroke="#474d52" stroke-width="2.4" opacity="0.85"/><path d="M763.2 265.200L767.4 264.200L771.3 263.700L774.9 263.700L778.0 264.200L780.6 265.200" stroke="#474d52" stroke-width="2.2" opacity="0.95"/><path d="M713.1 284.0L708.5 279.400" stroke="#50575c" stroke-width="3.800" opacity="0.95"/><path d="M782.1 264.400L780.7 269.700L794.6 280.400L795.0 278.900Z" fill="url(#wbg)" stroke="none"/><path d="M763.0 263.600L767.1 268.200" stroke="#4d5459" stroke-width="3" opacity=".9"/><path d="M722.9 297.300L724.8 295.100L727.4 292.900L730.8 290.700L734.7 288.700L739.2 286.800L744.3 285.200L749.7 284.0L755.5 283.0L761.4 282.500L767.5 282.400" stroke="#bcc7ce" stroke-width="2.600" opacity="0.60"/><path d="M774.4 278.700L778.6 277.600L782.5 276.900L786.1 276.800L789.1 277.100L791.6 277.900L793.4 279.100" stroke="#bcc7ce" stroke-width="2.6" opacity="0.55"/><path d="M725.0 299.900L727.0 297.700L729.6 295.500L732.9 293.400L736.9 291.400L741.5 289.600L746.5 288.100L751.9 286.900L757.7 286.0L763.7 285.500L769.7 285.400" stroke="#474d52" stroke-width="2.4" opacity="0.85"/><path d="M776.6 281.600L780.8 280.500L784.8 279.800L788.3 279.600L791.3 279.900L793.8 280.600L795.6 281.800" stroke="#474d52" stroke-width="2.2" opacity="0.95"/><path d="M725.8 298.200L721.3 292.900" stroke="#50575c" stroke-width="3.800" opacity="0.95"/><path d="M795.8 279.900L794.1 285.100L807.5 297.500L808.0 296.0Z" fill="url(#wbg)" stroke="none"/><path d="M776.5 279.800L780.5 285.100" stroke="#4d5459" stroke-width="3" opacity=".9"/><path d="M735.2 313.100L737.2 311.200L739.9 309.200L743.4 307.400L747.4 305.700L752.0 304.100L757.1 302.800L762.6 301.800L768.4 301.100L774.4 300.800L780.4 300.800" stroke="#bcc7ce" stroke-width="2.600" opacity="0.60"/><path d="M787.4 296.900L791.6 295.600L795.5 294.800L799.0 294.400L802.0 294.500L804.4 295.0L806.2 295.900" stroke="#bcc7ce" stroke-width="2.6" opacity="0.55"/><path d="M737.2 315.900L739.2 314.100L742.0 312.200L745.4 310.400L749.5 308.800L754.1 307.300L759.3 306.0L764.8 305.0L770.5 304.400L776.5 304.100L782.6 304.200" stroke="#474d52" stroke-width="2.4" opacity="0.85"/><path d="M789.6 300.200L793.8 298.900L797.7 298.0L801.2 297.600L804.2 297.600L806.6 298.100L808.3 299.0" stroke="#474d52" stroke-width="2.2" opacity="0.95"/><path d="M738.1 314.400L733.8 308.400" stroke="#50575c" stroke-width="3.800" opacity="0.95"/><path d="M808.9 297.200L806.8 302.300L819.8 316.300L820.3 314.900Z" fill="url(#wbg)" stroke="none"/><path d="M789.5 298.200L793.3 304.0" stroke="#4d5459" stroke-width="3" opacity=".9"/><path d="M746.9 330.700L749.0 329.100L751.9 327.500L755.4 326.0L759.5 324.600L764.2 323.400L769.4 322.300L774.9 321.600L780.7 321.100L786.7 321.0L792.7 321.200" stroke="#bcc7ce" stroke-width="2.600" opacity="0.60"/><path d="M799.8 317.0L804.1 315.600L808.0 314.600L811.4 314.0L814.4 313.800L816.7 314.100L818.4 314.700" stroke="#bcc7ce" stroke-width="2.6" opacity="0.55"/><path d="M748.9 333.800L751.0 332.300L753.9 330.800L757.4 329.300L761.5 328.0L766.2 326.800L771.4 325.800L777.0 325.100L782.8 324.700L788.7 324.600L794.8 324.900" stroke="#474d52" stroke-width="2.4" opacity="0.85"/><path d="M801.9 320.600L806.1 319.200L810.0 318.100L813.5 317.500L816.4 317.300L818.7 317.500L820.4 318.100" stroke="#474d52" stroke-width="2.2" opacity="0.95"/><path d="M749.8 332.500L745.7 325.800" stroke="#50575c" stroke-width="3.800" opacity="0.95"/><path d="M821.3 316.300L818.8 321.200L831.3 336.800L832.0 335.400Z" fill="url(#wbg)" stroke="none"/><path d="M801.9 318.400L805.4 324.900" stroke="#4d5459" stroke-width="3" opacity=".9"/><path d="M758.1 350.0L760.3 348.800L763.2 347.600L766.8 346.400L771.0 345.300L775.8 344.400L781.0 343.700L786.5 343.200L792.4 342.900L798.3 343.0L804.4 343.400" stroke="#bcc7ce" stroke-width="2.600" opacity="0.60"/><path d="M811.5 339.0L815.8 337.400L819.7 336.200L823.1 335.400L826.1 335.0L828.3 334.900L830.0 335.200L830.9 335.900" stroke="#bcc7ce" stroke-width="2.6" opacity="0.55"/><path d="M759.9 353.500L762.1 352.300L765.1 351.100L768.7 350.0L772.9 349.0L777.7 348.100L782.9 347.400L788.4 347.0L794.3 346.800L800.2 346.900L806.2 347.300" stroke="#474d52" stroke-width="2.4" opacity="0.85"/><path d="M813.4 342.900L817.7 341.200L821.6 340.0L825.1 339.200L828.0 338.700L830.2 338.600L831.9 338.900L832.7 339.500" stroke="#474d52" stroke-width="2.2" opacity="0.95"/><path d="M760.9 352.300L757.0 345.0" stroke="#50575c" stroke-width="3.800" opacity="0.95"/><path d="M832.9 336.900L830.1 341.700L842.1 358.700L842.8 357.400Z" fill="url(#wbg)" stroke="none"/><path d="M813.5 340.500L816.9 347.400" stroke="#4d5459" stroke-width="3" opacity=".9"/><path d="M768.5 370.900L770.8 370.100L773.8 369.200L777.5 368.400L781.8 367.600L786.6 367.0L791.8 366.600L797.4 366.400L803.2 366.400L809.2 366.600L815.2 367.200" stroke="#bcc7ce" stroke-width="2.600" opacity="0.60"/><path d="M822.5 362.600L826.7 360.800L830.7 359.400L834.1 358.400L837.0 357.700L839.2 357.400L840.8 357.400L841.6 357.800" stroke="#bcc7ce" stroke-width="2.6" opacity="0.55"/><path d="M770.2 374.600L772.6 373.800L775.6 373.0L779.2 372.300L783.5 371.600L788.3 371.0L793.6 370.600L799.2 370.400L805.0 370.500L810.9 370.800L816.9 371.400" stroke="#474d52" stroke-width="2.4" opacity="0.85"/><path d="M824.2 366.700L828.5 364.900L832.4 363.500L835.9 362.500L838.8 361.800L841.0 361.400L842.5 361.400L843.4 361.600" stroke="#474d52" stroke-width="2.2" opacity="0.95"/><path d="M771.4 373.700L767.7 365.800" stroke="#50575c" stroke-width="3.800" opacity="0.95"/><path d="M843.7 359.200L840.5 363.600L852.0 382.0L852.9 380.800Z" fill="url(#wbg)" stroke="none"/><path d="M824.4 364.200L827.5 371.600" stroke="#4d5459" stroke-width="3" opacity=".9"/><path d="M778.2 393.300L780.6 392.800L783.7 392.300L787.4 391.800L791.7 391.400L796.5 391.100L801.8 391.0L807.4 391.0L813.2 391.200L819.1 391.700L825.1 392.400" stroke="#bcc7ce" stroke-width="2.600" opacity="0.55"/><path d="M832.5 387.600L836.8 385.700L840.8 384.200L844.2 382.900L847.1 382.0L849.3 381.400L850.8 381.100L851.6 381.100" stroke="#bcc7ce" stroke-width="2.6" opacity="0.55"/><path d="M779.8 397.200L782.2 396.800L785.3 396.300L789.0 395.900L793.3 395.600L798.1 395.300L803.4 395.200L809.0 395.300L814.8 395.600L820.7 396.100L826.700 396.800" stroke="#474d52" stroke-width="1.6" opacity="0.95"/><path d="M834.1 392.0L838.4 390.100L842.4 388.500L845.8 387.200L848.7 386.300L850.9 385.600L852.4 385.300L853.2 385.200" stroke="#474d52" stroke-width="2.2" opacity="0.95"/><path d="M781.0 396.500L777.6 388.100" stroke="#50575c" stroke-width="3.800" opacity="0.95"/><path d="M853.7 382.700L850.1 386.800L861.0 406.500L862.0 405.400Z" fill="url(#wbg)" stroke="none"/><path d="M834.4 389.300L837.2 397.100" stroke="#4d5459" stroke-width="3" opacity=".9"/><path d="M787.1 416.900L789.5 416.800L792.6 416.600L796.4 416.500L800.7 416.500L805.6 416.500L810.8 416.600L816.4 416.900L822.2 417.400L828.1 418.0L834.0 418.800" stroke="#bcc7ce" stroke-width="2.600" opacity="0.55"/><path d="M841.6 413.900L846.0 411.900L849.9 410.200L853.4 408.700L856.2 407.600L858.4 406.700L859.9 406.100L860.7 405.700" stroke="#bcc7ce" stroke-width="2.6" opacity="0.55"/><path d="M788.5 421.0L790.9 421.0L794.1 420.900L797.8 420.800L802.2 420.800L807.0 420.900L812.3 421.100L817.9 421.400L823.7 421.900L829.6 422.600L835.5 423.500" stroke="#474d52" stroke-width="1.6" opacity="0.95"/><path d="M843.1 418.500L847.4 416.400L851.4 414.700L854.8 413.200L857.7 412.0L859.9 411.100L861.4 410.400L862.1 410.0" stroke="#474d52" stroke-width="2.2" opacity="0.95"/><path d="M789.7 420.500L786.7 411.700" stroke="#50575c" stroke-width="3.800" opacity="0.95"/><path d="M862.8 407.400L858.7 411.100L869.1 432.100L870.2 431.0Z" fill="url(#wbg)" stroke="none"/><path d="M843.4 415.600L845.9 423.800" stroke="#4d5459" stroke-width="3" opacity=".9"/><path d="M795.1 441.600L797.5 441.800L800.6 442.100L804.4 442.300L808.8 442.600L813.6 442.900L818.9 443.300L824.5 443.900L830.3 444.500L836.1 445.400L842.0 446.300" stroke="#bcc7ce" stroke-width="2.600" opacity="0.55"/><path d="M849.7 441.200L854.1 439.100L858.1 437.200L861.5 435.600L864.4 434.200L866.6 433.0L868.1 432.100L868.8 431.500" stroke="#bcc7ce" stroke-width="2.6" opacity="0.55"/><path d="M796.3 445.900L798.8 446.200L801.9 446.500L805.7 446.800L810.1 447.100L814.9 447.500L820.2 448.0L825.7 448.500L831.5 449.300L837.4 450.100L843.2 451.100" stroke="#474d52" stroke-width="1.6" opacity="0.95"/><path d="M851.0 446.0L855.4 443.900L859.4 441.900L862.8 440.300L865.7 438.800L867.9 437.600L869.4 436.700L870.1 435.900" stroke="#474d52" stroke-width="2.2" opacity="0.95"/><path d="M797.6 445.500L794.9 436.400" stroke="#50575c" stroke-width="3.800" opacity="0.95"/><path d="M870.9 433.100L866.4 436.400L876.1 458.400L877.4 457.500Z" fill="url(#wbg)" stroke="none"/><path d="M851.4 443.100L853.6 451.500" stroke="#4d5459" stroke-width="3" opacity=".9"/><path d="M802.1 467.200L804.5 467.800L807.7 468.400L811.5 469.0L815.8 469.600L820.7 470.200L825.9 470.900L831.5 471.700L837.2 472.600L843.0 473.500L848.8 474.600" stroke="#bcc7ce" stroke-width="2.600" opacity="0.55"/><path d="M856.7 469.500L861.1 467.200L865.2 465.200L868.7 463.400L871.5 461.700L873.7 460.300L875.2 459.100L875.9 458.100" stroke="#bcc7ce" stroke-width="2.6" opacity="0.55"/><path d="M803.1 471.600L805.6 472.300L808.8 472.900L812.5 473.600L816.9 474.200L821.8 474.900L827.0 475.700L832.5 476.500L838.3 477.400L844.1 478.400L849.9 479.500" stroke="#474d52" stroke-width="1.6" opacity="0.95"/><path d="M857.8 474.300L862.2 472.100L866.3 470.0L869.8 468.200L872.7 466.500L874.9 465.0L876.3 463.800L877.0 462.700" stroke="#474d52" stroke-width="2.2" opacity="0.95"/><path d="M804.4 471.500L802.1 462.0" stroke="#50575c" stroke-width="3.800" opacity="0.95"/><path d="M877.9 459.700L873.1 462.300L882.1 485.400L883.5 484.700Z" fill="url(#wbg)" stroke="none"/><path d="M858.3 471.300L860.2 479.900" stroke="#4d5459" stroke-width="3" opacity=".9"/><path d="M808.0 493.500L810.5 494.500L813.6 495.400L817.4 496.300L821.8 497.300L826.6 498.200L831.8 499.200L837.3 500.200L843.0 501.200L848.8 502.400L854.5 503.600" stroke="#bcc7ce" stroke-width="2.600" opacity="0.55"/><path d="M862.5 498.300L867.1 496.0L871.1 493.800L874.7 491.800L877.6 489.900L879.8 488.300L881.3 486.700L882.0 485.400" stroke="#bcc7ce" stroke-width="2.6" opacity="0.55"/><path d="M808.9 498.0L811.4 499.0L814.5 500.0L818.3 501.0L822.7 502.0L827.5 503.0L832.7 504.0L838.2 505.100L843.9 506.200L849.6 507.300L855.4 508.500" stroke="#474d52" stroke-width="1.6" opacity="0.95"/><path d="M863.4 503.300L868.0 501.0L872.0 498.800L875.6 496.700L878.5 494.800L880.7 493.100L882.2 491.500L882.9 490.100" stroke="#474d52" stroke-width="2.2" opacity="0.95"/><path d="M810.2 498.100L808.3 488.400" stroke="#50575c" stroke-width="3.800" opacity="0.95"/><path d="M884.0 487.0L878.8 489.0L887.1 513.0L888.5 512.500Z" fill="url(#wbg)" stroke="none"/><path d="M864.1 500.200L865.6 509.0" stroke="#4d5459" stroke-width="3" opacity=".9"/><path d="M812.9 520.300L815.4 521.600L818.5 522.900L822.3 524.200L826.6 525.400L831.4 526.600L836.6 527.900L842.0 529.100L847.7 530.300L853.4 531.600L859.0 532.900" stroke="#bcc7ce" stroke-width="2.600" opacity="0.55"/><path d="M867.2 527.600L871.8 525.200L875.9 522.900L879.5 520.700L882.5 518.600L884.7 516.700L886.2 514.900L886.9 513.200" stroke="#bcc7ce" stroke-width="2.6" opacity="0.55"/><path d="M813.7 524.800L816.1 526.200L819.2 527.600L823.0 528.900L827.3 530.200L832.1 531.500L837.3 532.800L842.7 534.0L848.3 535.300L854.0 536.600L859.7 537.900" stroke="#474d52" stroke-width="1.6" opacity="0.95"/><path d="M867.9 532.600L872.5 530.200L876.6 527.900L880.2 525.600L883.2 523.500L885.4 521.500L886.9 519.700L887.7 518.0" stroke="#474d52" stroke-width="2.2" opacity="0.95"/><path d="M815.0 525.100L813.4 515.300" stroke="#50575c" stroke-width="3.800" opacity="0.95"/><path d="M888.9 514.900L883.5 516.100L890.9 540.900L892.3 540.500Z" fill="url(#wbg)" stroke="none"/><path d="M868.7 529.500L869.8 538.300" stroke="#4d5459" stroke-width="3" opacity=".9"/><path d="M816.7 547.300L819.2 549.0L822.3 550.700L826.0 552.200L830.3 553.800L835.0 555.300L840.1 556.800L845.5 558.200L851.1 559.600L856.7 561.0L862.3 562.400" stroke="#bcc7ce" stroke-width="2.600" opacity="0.55"/><path d="M870.7 557.100L875.4 554.600L879.5 552.200L883.2 549.800L886.2 547.600L888.5 545.400L890.0 543.300L890.7 541.300" stroke="#b9c5cc" stroke-width="3.2" opacity="0.85"/><path d="M817.3 552.0L819.7 553.700L822.8 555.400L826.5 557.0L830.8 558.600L835.5 560.200L840.6 561.700L846.0 563.200L851.6 564.600L857.2 566.0L862.8 567.400" stroke="#474d52" stroke-width="1.6" opacity="0.95"/><path d="M871.2 562.100L875.8 559.600L880.0 557.200L883.7 554.800L886.7 552.500L889.0 550.200L890.5 548.100L891.3 546.100" stroke="#474d52" stroke-width="1.4" opacity="0.45"/><path d="M818.6 552.400L817.4 542.600" stroke="#50575c" stroke-width="3.800" opacity="0.95"/><path d="M892.6 543.0L887.1 543.400L893.5 568.800L895.0 568.700Z" fill="url(#wbg)" stroke="none"/><path d="M872.1 559.0L872.9 567.800" stroke="#4d5459" stroke-width="3" opacity=".9"/><path d="M819.4 574.500L821.8 576.500L824.8 578.500L828.5 580.400L832.7 582.200L837.4 584.0L842.5 585.700L847.8 587.300L853.3 588.900L858.9 590.400L864.4 591.800" stroke="#bcc7ce" stroke-width="2.600" opacity="0.13"/><path d="M872.9 586.500L877.7 584.0L881.9 581.500L885.6 579.0L888.6 576.500L891.0 574.100L892.6 571.700L893.4 569.500" stroke="#b9c5cc" stroke-width="3.2" opacity="0.85"/><path d="M819.8 579.100L822.1 581.200L825.2 583.200L828.8 585.100L833.0 587.0L837.7 588.800L842.8 590.600L848.1 592.200L853.6 593.800L859.1 595.300L864.6 596.800" stroke="#474d52" stroke-width="1.1" opacity="0.77"/><path d="M873.2 591.500L877.9 589.0L882.2 586.500L885.9 583.900L888.9 581.400L891.3 579.0L892.9 576.600L893.7 574.300" stroke="#474d52" stroke-width="1.4" opacity="0.45"/><path d="M821.1 579.800L820.3 570.0" stroke="#50575c" stroke-width="3.800" opacity="0.95"/><path d="M895.1 571.200L889.7 570.800L894.9 596.700L896.4 596.800Z" fill="url(#wbg)" stroke="none"/><path d="M874.2 588.400L874.6 597.200" stroke="#4d5459" stroke-width="3" opacity=".9"/><path d="M820.9 601.600L823.2 603.900L826.2 606.200L829.8 608.300L834.0 610.400L838.6 612.500L843.6 614.400L848.9 616.200L854.3 617.900L859.8 619.500L865.2 620.900" stroke="#c3cfd7" stroke-width="2.600" opacity="0.16"/><path d="M873.9 615.700L878.7 613.200L883.0 610.600L886.8 607.900L889.9 605.300L892.3 602.600L893.9 600.0L894.8 597.500" stroke="#b9c5cc" stroke-width="3.2" opacity="0.85"/><path d="M821.1 606.100L823.4 608.500L826.4 610.800L829.9 613.100L834.1 615.200L838.7 617.300L843.7 619.200L848.9 621.100L854.3 622.800L859.8 624.400L865.2 625.800" stroke="#474d52" stroke-width="1.1" opacity="0.69"/><path d="M873.9 620.700L878.8 618.100L883.1 615.500L886.9 612.800L890.0 610.100L892.4 607.400L894.1 604.800L894.9 602.200" stroke="#474d52" stroke-width="1.4" opacity="0.45"/><path d="M822.4 607.0L822.0 597.200" stroke="#50575c" stroke-width="3.800" opacity="0.95"/><path d="M896.5 599.200L891.1 598.0L895.2 624.200L896.6 624.500Z" fill="url(#wbg)" stroke="none"/><path d="M875.1 617.600L875.1 626.200" stroke="#4d5459" stroke-width="3" opacity=".9"/><path d="M821.3 628.300L823.5 630.900L826.4 633.500L830.0 635.900L834.0 638.300L838.6 640.500L843.5 642.600L848.7 644.600L854.0 646.400L859.4 648.100L864.7 649.600" stroke="#c3cfd7" stroke-width="2.600" opacity="0.19"/><path d="M873.6 644.500L878.5 641.900L882.9 639.200L886.7 636.400L889.9 633.600L892.4 630.800L894.1 627.900L895.0 625.100" stroke="#b9c5cc" stroke-width="3.2" opacity="0.85"/><path d="M821.2 632.800L823.5 635.500L826.4 638.100L829.9 640.600L833.9 643.0L838.4 645.200L843.3 647.400L848.5 649.400L853.8 651.200L859.2 652.900L864.5 654.400" stroke="#474d52" stroke-width="1.1" opacity="0.62"/><path d="M873.4 649.300L878.3 646.700L882.7 644.0L886.6 641.200L889.8 638.400L892.3 635.500L894.0 632.600L894.9 629.800" stroke="#474d52" stroke-width="1.4" opacity="0.45"/><path d="M822.5 633.800L822.6 624.200" stroke="#50575c" stroke-width="3.800" opacity="0.95"/><path d="M896.5 627.0L891.4 625.200L894.2 651.400L895.6 651.900Z" fill="url(#wbg)" stroke="none"/><path d="M874.7 646.300L874.4 654.700" stroke="#4d5459" stroke-width="3" opacity=".9"/><path d="M820.5 654.500L822.6 657.400L825.4 660.200L828.9 662.900L832.9 665.500L837.3 668.0L842.1 670.300L847.2 672.400L852.4 674.300L857.7 676.0L863.0 677.500" stroke="#c3cfd7" stroke-width="2.600" opacity="0.22"/><path d="M872.1 672.500L877.0 669.900L881.5 667.200L885.4 664.300L888.7 661.300L891.2 658.300L893.0 655.300L894.0 652.200" stroke="#b9c5cc" stroke-width="3.2" opacity="0.85"/><path d="M820.2 658.900L822.4 661.800L825.2 664.700L828.6 667.400L832.5 670.100L837.0 672.600L841.8 674.900L846.8 677.0L852.1 678.900L857.3 680.600L862.5 682.100" stroke="#474d52" stroke-width="1.1" opacity="0.54"/><path d="M871.7 677.200L876.6 674.600L881.1 671.900L885.1 669.0L888.3 666.0L890.9 662.900L892.7 659.800L893.8 656.800" stroke="#474d52" stroke-width="1.4" opacity="0.45"/><path d="M821.5 660.100L822.0 650.700" stroke="#50575c" stroke-width="3.800" opacity="0.95"/><path d="M895.4 654.300L890.5 651.800L892.0 677.800L893.3 678.500Z" fill="url(#wbg)" stroke="none"/><path d="M873.1 674.200L872.3 682.500" stroke="#4d5459" stroke-width="3" opacity=".9"/><path d="M818.5 679.900L820.6 683.100L823.3 686.200L826.6 689.100L830.5 691.900L834.8 694.600L839.5 697.0L844.5 699.200L849.6 701.200L854.8 703.0L860.0 704.500" stroke="#c3cfd7" stroke-width="2.600" opacity="0.25"/><path d="M869.3 699.600L874.3 697.100L878.8 694.300L882.8 691.300L886.2 688.200L888.9 685.0L890.8 681.800L891.9 678.500" stroke="#b9c5cc" stroke-width="3.2" opacity="0.85"/><path d="M818.1 684.200L820.1 687.400L822.8 690.500L826.1 693.500L830.0 696.300L834.3 699.0L839.0 701.500L843.9 703.700L849.0 705.700L854.2 707.400L859.4 708.900" stroke="#474d52" stroke-width="1.1" opacity="0.47"/><path d="M868.7 704.200L873.7 701.600L878.3 698.800L882.3 695.800L885.7 692.700L888.3 689.500L890.3 686.200L891.4 682.900" stroke="#474d52" stroke-width="1.4" opacity="0.45"/><path d="M819.3 685.600L820.2 676.500" stroke="#50575c" stroke-width="3.800" opacity="0.95"/><path d="M893.0 680.700L888.4 677.700L888.6 703.300L889.9 704.100Z" fill="url(#wbg)" stroke="none"/><path d="M870.2 701.300L869.1 709.200" stroke="#4d5459" stroke-width="3" opacity=".9"/><path d="M815.4 704.500L817.3 707.900L819.9 711.200L823.1 714.300L826.9 717.300L831.1 720.100L835.7 722.700L840.6 725.0L845.6 727.100L850.7 728.800L855.8 730.300" stroke="#c3cfd7" stroke-width="2.600" opacity="0.28"/><path d="M865.2 725.700L870.3 723.100L875.0 720.300L879.1 717.300L882.5 714.100L885.3 710.700L887.3 707.300L888.5 703.800" stroke="#b9c5cc" stroke-width="3.2" opacity="0.85"/><path d="M814.8 708.600L816.7 712.0L819.2 715.300L822.4 718.500L826.2 721.500L830.4 724.400L835.0 726.900L839.8 729.300L844.8 731.300L849.9 733.100L854.9 734.600" stroke="#474d52" stroke-width="1.1" opacity="0.39"/><path d="M864.4 730.0L869.5 727.400L874.2 724.600L878.3 721.600L881.8 718.400L884.6 715.0L886.6 711.500L887.8 708.0" stroke="#474d52" stroke-width="1.4" opacity="0.45"/><path d="M815.9 710.100L817.3 701.400" stroke="#50575c" stroke-width="3.800" opacity="0.95"/><path d="M889.4 706.500L885.1 703.100L884.0 728.0L885.2 728.900Z" fill="url(#wbg)" stroke="none"/><path d="M866.1 727.200L864.6 734.800" stroke="#4d5459" stroke-width="3" opacity=".9"/><path d="M811.2 727.900L813.0 731.500L815.4 735.0L818.5 738.400L822.2 741.500L826.3 744.500L830.7 747.100L835.5 749.500L840.4 751.600L845.4 753.400L850.4 754.800" stroke="#c3cfd7" stroke-width="2.600" opacity="0.31"/><path d="M860.0 750.400L865.2 747.900L869.9 745.0L874.1 742.0L877.7 738.700L880.5 735.200L882.6 731.600L884.0 728.0" stroke="#b9c5cc" stroke-width="3.2" opacity="0.85"/><path d="M810.4 731.800L812.1 735.400L814.6 738.900L817.6 742.300L821.2 745.500L825.3 748.400L829.8 751.100L834.5 753.500L839.4 755.600L844.4 757.400L849.3 758.800" stroke="#474d52" stroke-width="1.1" opacity="0.32"/><path d="M859.0 754.400L864.2 751.900L868.9 749.100L873.1 746.0L876.7 742.700L879.6 739.200L881.7 735.600L883.1 732.0" stroke="#474d52" stroke-width="1.4" opacity="0.45"/><path d="M811.5 733.500L813.2 725.300" stroke="#50575c" stroke-width="3.800" opacity="0.95"/><path d="M884.6 731.0L880.6 727.200L878.2 751.300L879.3 752.300Z" fill="url(#wbg)" stroke="none"/><path d="M860.8 751.800L858.9 758.900" stroke="#4d5459" stroke-width="3" opacity=".9"/><path d="M805.9 750.100L807.5 753.900L809.8 757.500L812.8 761.0L816.3 764.300L820.3 767.400L824.6 770.100L829.2 772.600L834.1 774.700L839.0 776.400L843.8 777.800" stroke="#c3cfd7" stroke-width="2.600" opacity="0.42"/><path d="M853.6 773.600L858.8 771.100L863.7 768.300L868.0 765.200L871.7 761.900L874.6 758.300L876.9 754.600" stroke="#b9c5cc" stroke-width="3.2" opacity="0.85"/><path d="M804.9 753.700L806.5 757.500L808.8 761.200L811.7 764.700L815.2 768.0L819.1 771.100L823.5 773.900L828.1 776.300L832.9 778.400L837.8 780.200L842.6 781.500" stroke="#474d52" stroke-width="1.2" opacity="0.30"/><path d="M852.4 777.400L857.7 774.900L862.5 772.100L866.8 769.0L870.5 765.600L873.5 762.100L875.8 758.300" stroke="#474d52" stroke-width="1.4" opacity="0.45"/><path d="M805.9 755.600L808.0 747.800" stroke="#50575c" stroke-width="3.800" opacity="0.60"/><path d="M878.6 754.500L874.9 750.400L871.1 773.500L872.1 774.600Z" fill="url(#wbg)" stroke="none"/><path d="M854.3 774.900L852.1 781.500" stroke="#4d5459" stroke-width="3" opacity=".9"/><path d="M799.5 770.800L801.0 774.700L803.2 778.500L806.0 782.100L809.3 785.500L813.2 788.700L817.4 791.500L821.9 794.0L826.6 796.100L831.4 797.800L836.2 799.100" stroke="#c3cfd7" stroke-width="2.600" opacity="0.54"/><path d="M846.1 795.200L851.4 792.700L856.3 789.900L860.7 786.800L864.5 783.400L867.6 779.800L870.0 776.0" stroke="#b9c5cc" stroke-width="3.2" opacity="0.85"/><path d="M798.3 774.200L799.8 778.100L801.9 781.900L804.7 785.600L808.0 789.0L811.9 792.100L816.0 794.900L820.5 797.400L825.2 799.500L830.0 801.200L834.8 802.500" stroke="#474d52" stroke-width="1.2" opacity="0.30"/><path d="M844.7 798.600L850.1 796.200L855.0 793.500L859.4 790.300L863.2 786.900L866.4 783.300L868.7 779.500" stroke="#474d52" stroke-width="1.4" opacity="0.45"/><path d="M799.3 776.100L801.8 768.900" stroke="#50575c" stroke-width="3.800" opacity="0.60"/><path d="M871.3 776.700L867.9 772.300L862.8 794.300L863.7 795.400Z" fill="url(#wbg)" stroke="none"/><path d="M846.7 796.300L844.2 802.400" stroke="#4d5459" stroke-width="3" opacity=".9"/><path d="M792.1 789.900L793.5 793.900L795.5 797.800L798.1 801.500L801.3 805.0L805.0 808.200L809.1 811.100L813.5 813.600L818.1 815.600L822.8 817.300L827.5 818.500" stroke="#c3cfd7" stroke-width="2.600" opacity="0.66"/><path d="M837.5 814.900L842.9 812.500L848.0 809.800L852.5 806.700L856.4 803.200L859.6 799.500L862.1 795.700" stroke="#b9c5cc" stroke-width="3.2" opacity="0.85"/><path d="M790.8 792.900L792.1 797.0L794.1 800.900L796.7 804.700L799.9 808.100L803.5 811.300L807.6 814.200L812.0 816.700L816.5 818.800L821.2 820.400L825.9 821.600" stroke="#474d52" stroke-width="1.2" opacity="0.30"/><path d="M836.0 818.0L841.4 815.700L846.4 813.0L851.0 809.800L854.9 806.400L858.1 802.700L860.7 798.800" stroke="#474d52" stroke-width="1.4" opacity="0.45"/><path d="M791.7 795.0L794.5 788.400" stroke="#50575c" stroke-width="3.800" opacity="0.60"/><path d="M862.8 797.400L859.7 792.800L853.2 813.500L854.0 814.700Z" fill="url(#wbg)" stroke="none"/><path d="M838.1 815.900L835.3 821.400" stroke="#4d5459" stroke-width="3" opacity=".9"/><path d="M783.8 807.200L785.0 811.300L786.9 815.300L789.3 819.100L792.4 822.600L795.9 825.900L799.9 828.700L804.1 831.200L808.6 833.200L813.2 834.800L817.8 835.900" stroke="#c3cfd7" stroke-width="2.600" opacity="0.78"/><path d="M828.0 832.600L833.5 830.300L838.6 827.600L843.2 824.600L847.2 821.100L850.6 817.400" stroke="#b9c5cc" stroke-width="3.2" opacity="0.85"/><path d="M782.3 810.0L783.5 814.100L785.3 818.100L787.8 821.900L790.8 825.400L794.3 828.700L798.2 831.500L802.4 834.0L806.9 836.0L811.5 837.600L816.1 838.700" stroke="#474d52" stroke-width="1.2" opacity="0.30"/><path d="M826.2 835.400L831.8 833.100L836.9 830.500L841.5 827.400L845.6 824.0L849.0 820.200" stroke="#474d52" stroke-width="1.4" opacity="0.45"/><path d="M783.1 812.200L786.3 806.200" stroke="#50575c" stroke-width="3.800" opacity="0.60"/><path d="M852.9 816.700L850.2 811.900L842.2 831.200L842.9 832.500Z" fill="url(#wbg)" stroke="none"/><path d="M828.5 833.500L825.4 838.300" stroke="#4d5459" stroke-width="3" opacity=".9"/><path d="M774.6 822.600L775.6 826.800L777.3 830.900L779.6 834.700L782.5 838.200L785.9 841.500L789.7 844.300L793.8 846.700L798.2 848.700L802.7 850.200L807.2 851.200" stroke="#c3cfd7" stroke-width="2.600" opacity="0.90"/><path d="M817.5 848.200L823.1 846.0L828.3 843.400L833.0 840.400L837.1 837.0L840.6 833.200" stroke="#b9c5cc" stroke-width="3.2" opacity="0.85"/><path d="M773.0 825.100L774.0 829.300L775.6 833.300L777.9 837.100L780.8 840.700L784.1 843.900L787.9 846.700L792.0 849.200L796.4 851.100L800.8 852.600L805.3 853.600" stroke="#474d52" stroke-width="1.2" opacity="0.30"/><path d="M815.6 850.600L821.2 848.500L826.4 845.900L831.2 842.800L835.4 839.400L838.9 835.700" stroke="#474d52" stroke-width="1.4" opacity="0.45"/><path d="M773.7 827.300L777.2 822.100" stroke="#50575c" stroke-width="3.800" opacity="0.60"/><path d="M841.6 834.300L839.1 829.400L829.5 847.300L830.2 848.600Z" fill="url(#wbg)" stroke="none"/><path d="M764.6 836.100L765.5 840.300L767.0 844.300L769.1 848.200L771.8 851.700L775.1 854.900L778.7 857.700L782.7 860.100L787.0 862.0L791.4 863.400L795.8 864.300" stroke="#c3cfd7" stroke-width="2.600" opacity="0.92"/><path d="M806.2 861.500L811.8 859.500L817.1 857.0L822.0 854.0L826.2 850.600" stroke="#b9c5cc" stroke-width="3.2" opacity="0.85"/><path d="M762.8 838.100L763.6 842.400L765.1 846.400L767.2 850.200L769.9 853.800L773.2 857.0L776.8 859.800L780.8 862.100L785.0 864.0L789.4 865.400L793.8 866.200" stroke="#474d52" stroke-width="1.2" opacity="0.30"/><path d="M804.2 863.600L809.9 861.600L815.2 859.0L820.0 856.100L824.3 852.700" stroke="#474d52" stroke-width="1.4" opacity="0.45"/><path d="M763.5 840.500L767.2 836.0" stroke="#50575c" stroke-width="3.800" opacity="0.60"/><path d="M828.5 850.500L826.3 845.400L814.8 861.800L815.4 863.200Z" fill="url(#wbg)" stroke="none"/><path d="M753.9 847.400L754.5 851.600L755.9 855.600L757.8 859.400L760.4 862.900L763.5 866.100L767.0 868.800L770.9 871.100L775.0 872.900L779.3 874.200L783.7 874.900" stroke="#c3cfd7" stroke-width="2.600" opacity="0.92"/><path d="M794.1 872.600L799.9 870.600L805.2 868.200L810.2 865.300" stroke="#b9c5cc" stroke-width="3.2" opacity="0.85"/><path d="M752.0 849.100L752.6 853.300L753.9 857.300L755.9 861.100L758.4 864.600L761.4 867.800L764.9 870.500L768.8 872.700L772.9 874.500L777.2 875.800L781.5 876.500" stroke="#474d52" stroke-width="1.2" opacity="0.30"/><path d="M792.0 874.200L797.8 872.300L803.1 869.900L808.1 867.0" stroke="#474d52" stroke-width="1.4" opacity="0.45"/><path d="M752.5 851.500L756.5 847.800" stroke="#50575c" stroke-width="3.800" opacity="0.60"/><path d="M813.3 864.900L811.4 859.700L797.5 874.400L798.0 875.800Z" fill="url(#wbg)" stroke="none"/><path d="M742.5 856.500L743.0 860.700L744.1 864.700L745.9 868.400L748.3 871.800L751.2 874.900L754.6 877.600L758.3 879.800L762.4 881.400L766.6 882.600L770.9 883.200" stroke="#c3cfd7" stroke-width="2.600" opacity="0.92"/><path d="M781.4 881.100L787.2 879.300L792.7 877.0" stroke="#b9c5cc" stroke-width="3.2" opacity="0.85"/><path d="M740.5 857.800L740.9 862.0L742.1 866.0L743.8 869.700L746.2 873.100L749.1 876.200L752.4 878.800L756.2 881.0L760.2 882.600L764.4 883.800L768.6 884.300" stroke="#474d52" stroke-width="1.2" opacity="0.30"/><path d="M779.2 882.400L785.0 880.600L790.5 878.300" stroke="#474d52" stroke-width="1.4" opacity="0.45"/><path d="M740.9 860.200L745.2 857.300" stroke="#50575c" stroke-width="3.800" opacity="0.60"/><path d="M795.1 877.500L793.6 872.200L776.9 884.500L777.3 886.0Z" fill="url(#wbg)" stroke="none"/><path d="M730.5 863.400L730.8 867.500L731.8 871.400L733.4 875.0L735.7 878.400L738.4 881.300L741.7 883.900L745.3 885.900L749.2 887.500L753.3 888.500L757.5 888.900" stroke="#c3cfd7" stroke-width="2.600" opacity="0.92"/><path d="M768.2 887.200L774.0 885.600" stroke="#b9c5cc" stroke-width="3.2" opacity="0.85"/><path d="M728.4 864.300L728.7 868.400L729.7 872.300L731.3 875.900L733.5 879.200L736.2 882.200L739.4 884.700L743.0 886.700L746.9 888.300L751.0 889.200L755.2 889.600" stroke="#474d52" stroke-width="1.2" opacity="0.30"/><path d="M728.8 866.700L733.2 864.600" stroke="#50575c" stroke-width="3.800" opacity="0.60"/><path d="M718.1 867.900L718.2 871.900L719.0 875.700L720.5 879.200L722.5 882.500L725.1 885.300L728.2 887.700L731.7 889.600L735.5 891.0L739.6 891.800L743.7 892.100" stroke="#c3cfd7" stroke-width="2.600" opacity="0.92"/><path d="M715.9 868.500L716.0 872.400L716.8 876.200L718.2 879.700L720.3 882.900L722.8 885.700L725.9 888.100L729.4 890.0L733.2 891.300L737.2 892.200L741.4 892.400" stroke="#474d52" stroke-width="1.2" opacity="0.30"/><path d="M716.2 870.800L720.8 869.600" stroke="#50575c" stroke-width="3.800" opacity="0.60"/><path d="M705.3 870.100L705.2 874.0L705.8 877.600L707.1 881.0L709.0 884.100L711.5 886.800L714.4 889.0L717.8 890.800L721.5 892.0L725.5 892.600" stroke="#c3cfd7" stroke-width="2.600" opacity="0.92"/><path d="M703.1 870.300L703.0 874.100L703.6 877.700L704.8 881.100L706.7 884.100L709.1 886.800L712.1 889.0L715.4 890.700L719.1 891.900L723.1 892.500" stroke="#474d52" stroke-width="1.2" opacity="0.30"/><path d="M703.2 872.600L707.9 872.200" stroke="#50575c" stroke-width="3.800" opacity="0.60"/><path d="M690.2 869.700L703.1 882.500" stroke="#555d62" stroke-width="1.600"/><path d="M688.8 869.400L701.7 882.200" stroke="#aebbc3" stroke-width="1.300" opacity=".8"/><path d="M703.1 882.500L713.6 893.0" stroke="url(#wbg)" stroke-width="2.200"/><path d="M676.9 866.800L685.6 878.500" stroke="#555d62" stroke-width="1.600"/><path d="M675.5 866.500L684.2 878.200" stroke="#aebbc3" stroke-width="1.300" opacity=".8"/><path d="M685.6 878.500L692.6 888.0" stroke="url(#wbg)" stroke-width="2.200"/><path d="M663.5 861.600L669.1 871.800" stroke="#555d62" stroke-width="1.600"/><path d="M662.1 861.300L667.7 871.500" stroke="#aebbc3" stroke-width="1.300" opacity=".8"/><path d="M669.1 871.800L673.6 880.300" stroke="url(#wbg)" stroke-width="2.200"/><path d="M650.2 854.0L653.6 862.900" stroke="#555d62" stroke-width="1.600"/><path d="M648.8 853.700L652.2 862.600" stroke="#aebbc3" stroke-width="1.300" opacity=".8"/><path d="M653.6 862.900L656.3 870.200" stroke="url(#wbg)" stroke-width="2.200"/><path d="M637.0 844.200L638.8 851.800" stroke="#555d62" stroke-width="1.600"/><path d="M635.6 843.900L637.4 851.500" stroke="#aebbc3" stroke-width="1.300" opacity=".8"/><path d="M638.8 851.800L640.3 858.0" stroke="url(#wbg)" stroke-width="2.200"/><path d="M624.1 832.300L624.8 838.700" stroke="#555d62" stroke-width="1.600"/><path d="M622.7 832.0L623.4 838.400" stroke="#aebbc3" stroke-width="1.300" opacity=".8"/><path d="M624.8 838.700L625.3 843.900" stroke="url(#wbg)" stroke-width="2.200"/><path d="M611.4 818.200L611.3 823.600" stroke="#555d62" stroke-width="1.600"/><path d="M610.0 817.900L609.9 823.300" stroke="#aebbc3" stroke-width="1.300" opacity=".8"/><path d="M611.3 823.600L611.2 828.0" stroke="url(#wbg)" stroke-width="2.200"/><path d="M599.3 802.200L598.4 806.700" stroke="#555d62" stroke-width="1.600"/><path d="M597.9 801.900L597.0 806.400" stroke="#aebbc3" stroke-width="1.300" opacity=".8"/><path d="M598.4 806.700L597.8 810.300" stroke="url(#wbg)" stroke-width="2.200"/><path d="M587.6 784.400L586.2 787.900" stroke="#555d62" stroke-width="1.600"/><path d="M586.2 784.100L584.8 787.600" stroke="#aebbc3" stroke-width="1.300" opacity=".8"/><path d="M586.2 787.900L585.0 790.900" stroke="url(#wbg)" stroke-width="2.200"/><path d="M515.8 462.0L514.0 451.100" stroke="#5d666c" stroke-width="2.200" opacity=".9"/><path d="M516.5 451.800L514.9 440.200" stroke="#c6d2da" stroke-width="2.800" opacity=".95"/><path d="M517.8 436.600L516.4 425.100" stroke="#5d666c" stroke-width="2.200" opacity=".9"/><path d="M519.0 426.700L517.8 414.500" stroke="#c6d2da" stroke-width="2.800" opacity=".95"/><path d="M521.4 409.700L519.3 399.500" stroke="url(#wbg)" stroke-width="2.0"/><path d="M521.0 412.100L520.0 400.0" stroke="#5d666c" stroke-width="2.200" opacity=".9"/><path d="M522.6 402.600L521.9 389.900" stroke="#c6d2da" stroke-width="2.800" opacity=".95"/><path d="M525.8 386.500L524.1 375.400" stroke="url(#wbg)" stroke-width="2.0"/><path d="M525.3 388.700L524.8 375.900" stroke="#5d666c" stroke-width="2.200" opacity=".9"/><path d="M527.3 379.700L527.2 366.300" stroke="#c6d2da" stroke-width="2.800" opacity=".95"/><path d="M531.3 364.500L530.1 352.500" stroke="url(#wbg)" stroke-width="2.0"/><path d="M530.7 366.700L530.8 353.100" stroke="#5d666c" stroke-width="2.200" opacity=".9"/><path d="M533.1 358.200L533.6 344.100" stroke="#c6d2da" stroke-width="2.800" opacity=".95"/><path d="M537.8 344.100L537.2 330.900" stroke="url(#wbg)" stroke-width="2.0"/><path d="M537.1 346.0L537.9 331.600" stroke="#5d666c" stroke-width="2.200" opacity=".9"/><path d="M539.9 338.200L541.1 323.300" stroke="#c6d2da" stroke-width="2.800" opacity=".95"/><path d="M545.3 325.200L545.5 310.800" stroke="url(#wbg)" stroke-width="2.0"/><path d="M544.5 327.0L546.2 311.500" stroke="#5d666c" stroke-width="2.200" opacity=".9"/><path d="M547.7 319.900L549.9 304.0" stroke="#c6d2da" stroke-width="2.800" opacity=".95"/><path d="M553.7 308.200L555.0 292.200" stroke="url(#wbg)" stroke-width="2.0"/><path d="M552.9 309.800L555.7 293.0" stroke="#5d666c" stroke-width="2.200" opacity=".9"/><path d="M556.5 303.400L559.7 286.300" stroke="#c6d2da" stroke-width="2.800" opacity=".95"/><path d="M563.1 293.0L565.7 275.200" stroke="url(#wbg)" stroke-width="2.0"/><path d="M562.1 294.500L566.4 276.100" stroke="#5d666c" stroke-width="2.200" opacity=".9"/><path d="M566.0 288.900L570.9 270.200" stroke="#c6d2da" stroke-width="2.800" opacity=".95"/><path d="M573.2 279.900L577.9 259.800" stroke="url(#wbg)" stroke-width="2.0"/><path d="M572.1 281.100L578.6 260.700" stroke="#5d666c" stroke-width="2.200" opacity=".9"/><path d="M576.4 276.400L583.4 255.800" stroke="#c6d2da" stroke-width="2.800" opacity=".95"/><path d="M584.0 268.900L591.9 246.100" stroke="url(#wbg)" stroke-width="2.0"/><path d="M582.9 269.900L592.5 247.100" stroke="#5d666c" stroke-width="2.200" opacity=".9"/><path d="M587.4 266.0L597.6 243.100" stroke="#c6d2da" stroke-width="2.800" opacity=".95"/><path d="M595.5 260.100L607.9 234.100" stroke="url(#wbg)" stroke-width="2.0"/><path d="M594.3 260.900L608.5 235.200" stroke="#5d666c" stroke-width="2.200" opacity=".9"/><path d="M599.1 257.900L613.9 232.200" stroke="#c6d2da" stroke-width="2.800" opacity=".95"/><path d="M607.5 253.600L626.5 224.300" stroke="url(#wbg)" stroke-width="2.0"/><path d="M606.3 254.200L627.0 225.500" stroke="#5d666c" stroke-width="2.200" opacity=".9"/><path d="M611.2 252.100L632.6 223.500" stroke="#c6d2da" stroke-width="2.800" opacity=".95"/><path d="M620.0 249.400L647.7 217.300" stroke="url(#wbg)" stroke-width="2.0"/><path d="M618.8 249.700L648.1 218.700" stroke="#5d666c" stroke-width="2.200" opacity=".9"/><path d="M623.9 248.600L653.9 217.800" stroke="#c6d2da" stroke-width="2.800" opacity=".95"/></g></g><g><path d="M580.2 771.600L576.3 764.400L575.0 770.400L578.4 776.700Z" fill="#5f686e" stroke="#5f686e" stroke-width=".6"/><path d="M569.6 751.0L566.0 743.200L564.0 747.800L567.1 754.600Z" fill="#5f686e" stroke="#5f686e" stroke-width=".6"/><path d="M559.8 728.900L556.4 720.600L553.7 723.700L556.6 731.0Z" fill="#5f686e" stroke="#5f686e" stroke-width=".6"/><path d="M550.7 705.500L547.7 696.800L544.4 698.300L547.0 705.900Z" fill="#5f686e" stroke="#5f686e" stroke-width=".6"/><path d="M542.6 681.0L539.9 671.900L536.3 671.800L538.6 679.700Z" fill="#5f686e" stroke="#5f686e" stroke-width=".6"/><path d="M535.4 655.500L533.1 646.200L529.5 644.600L531.4 652.700Z" fill="#5f686e" stroke="#5f686e" stroke-width=".6"/><path d="M529.3 629.400L527.3 619.800L523.8 616.900L525.4 625.200Z" fill="#5f686e" stroke="#5f686e" stroke-width=".6"/><path d="M524.1 602.700L522.6 593.0L519.2 588.900L520.5 597.300Z" fill="#5f686e" stroke="#5f686e" stroke-width=".6"/><path d="M520.1 575.600L519.0 565.900L515.7 560.800L516.7 569.200Z" fill="#5f686e" stroke="#5f686e" stroke-width=".6"/><path d="M517.2 548.500L516.5 538.700L513.4 532.600L514.0 541.0Z" fill="#5f686e" stroke="#5f686e" stroke-width=".6"/><path d="M515.5 521.400L515.2 511.700L512.3 504.600L512.6 513.0Z" fill="#5f686e" stroke="#5f686e" stroke-width=".6"/><path d="M514.9 494.600L515.0 485.0L512.4 477.0L512.3 485.200Z" fill="#5f686e" stroke="#5f686e" stroke-width=".6"/><path d="M515.5 468.300L516.0 458.900L513.8 450.0L513.3 458.0Z" fill="#5f686e" stroke="#5f686e" stroke-width=".6"/><path d="M517.2 442.600L518.2 433.600L516.3 423.700L515.4 431.400Z" fill="#5f686e" stroke="#5f686e" stroke-width=".6"/></g>
<path d="M650.8 315.100L658.8 314.600L667.1 315.300L675.3 317.200L683.7 320.300L692.0 324.500L700.2 329.800L708.4 336.300L716.5 343.800L724.4 352.400L732.1 362.0L739.5 372.500L746.7 383.900L753.5 396.100L760.1 409.200L766.2 422.900L771.9 437.400L777.2 452.400L782.0 467.900L786.4 483.800L790.2 500.100L793.5 516.700L796.3 533.400L798.5 550.300L800.2 567.200L801.3 584.100L801.8 600.800L801.7 617.400L801.1 633.600L799.8 649.500L798.0 664.900L795.7 679.700L792.8 694.0L789.3 707.600L785.3 720.500L780.9 732.600L775.9 743.800L770.5 754.100L764.7 763.500L758.4 771.800L751.8 779.100L744.9 785.400L737.6 790.500L730.1 794.500L722.4 797.300L714.4 798.900L706.4 799.400L698.1 798.700L689.9 796.800L681.5 793.700L673.2 789.500L665.0 784.200L656.8 777.700L648.7 770.200L640.8 761.600L633.1 752.0L625.7 741.500L618.5 730.100L611.7 717.900L605.1 704.800L599.0 691.100L593.3 676.600L588.0 661.600L583.2 646.100L578.8 630.200L575.0 613.900L571.7 597.300L568.9 580.600L566.7 563.700L565.0 546.800L563.9 529.900L563.4 513.200L563.5 496.600L564.1 480.400L565.4 464.500L567.2 449.100L569.5 434.300L572.4 420.0L575.9 406.400L579.9 393.500L584.3 381.400L589.3 370.200L594.7 359.900L600.5 350.500L606.8 342.200L613.4 334.900L620.3 328.600L627.6 323.500L635.1 319.500L642.8 316.700Z" fill="url(#gcres)"/>
<g clip-path="url(#cE2)"><path d="M692.8 310.600L700.8 310.100L709.0 310.800L717.2 312.700L725.5 315.700L733.8 319.900L742.0 325.300L750.2 331.700L758.2 339.200L766.1 347.700L773.7 357.200L781.2 367.700L788.3 379.100L795.1 391.300L801.6 404.300L807.7 418.0L813.4 432.300L818.7 447.300L823.5 462.700L827.8 478.600L831.7 494.800L835.0 511.300L837.7 528.0L840.0 544.800L841.6 561.700L842.7 578.500L843.2 595.200L843.1 611.600L842.5 627.800L841.2 643.600L839.4 658.900L837.1 673.700L834.2 687.900L830.7 701.500L826.8 714.300L822.3 726.400L817.4 737.500L812.0 747.800L806.2 757.100L800.0 765.500L793.4 772.700L786.5 778.900L779.3 784.0L771.8 788.0L764.1 790.800L756.2 792.400L748.1 792.900L740.0 792.200L731.7 790.300L723.4 787.200L715.1 783.0L706.9 777.700L698.8 771.300L690.7 763.800L682.9 755.300L675.2 745.700L667.8 735.300L660.7 723.900L653.8 711.700L647.3 698.700L641.2 685.0L635.5 670.600L630.3 655.700L625.4 640.300L621.1 624.400L617.3 608.200L614.0 591.700L611.2 575.0L609.0 558.100L607.4 541.300L606.3 524.500L605.8 507.800L605.8 491.400L606.5 475.200L607.7 459.400L609.5 444.100L611.9 429.300L614.8 415.0L618.2 401.500L622.2 388.600L626.6 376.600L631.6 365.400L636.9 355.200L642.7 345.800L649.0 337.500L655.5 330.200L662.4 324.100L669.7 319.0L677.1 315.0L684.9 312.200Z" fill="url(#wbg)"/></g>
<defs><linearGradient id="ghub" gradientUnits="userSpaceOnUse" x1="715" y1="520" x2="722" y2="582"><stop offset="0" stop-color="#5f676c"/><stop offset=".2" stop-color="#8f999f"/><stop offset=".45" stop-color="#b0bbc2"/><stop offset=".7" stop-color="#8e989e"/><stop offset="1" stop-color="#586065"/></linearGradient><linearGradient id="gfl" gradientUnits="userSpaceOnUse" x1="620" y1="500" x2="690" y2="620"><stop offset="0" stop-color="#6f787e"/><stop offset=".5" stop-color="#636b71"/><stop offset="1" stop-color="#596166"/></linearGradient><linearGradient id="gflb" gradientUnits="userSpaceOnUse" x1="725" y1="480" x2="790" y2="610"><stop offset="0" stop-color="#5f676c"/><stop offset=".5" stop-color="#6d767c"/><stop offset="1" stop-color="#7f898f"/></linearGradient></defs><g clip-path="url(#cE2)" fill="none" stroke-linecap="round"><path d="M620.4 351.700L731.0 488.0" stroke="#7d878d" stroke-width="6.8"/><path d="M620.0 352.0L730.6 488.300" stroke="#9aa5ac" stroke-width="5.3"/><path d="M619.7 352.300L730.3 488.600" stroke="#b4bfc6" stroke-width="3.5"/><path d="M619.5 352.400L730.1 488.700" stroke="#c9d4db" stroke-width="1.7"/><path d="M691.0 327.0L753.5 481.0" stroke="#7d878d" stroke-width="6.8"/><path d="M690.5 327.200L753.0 481.200" stroke="#9aa5ac" stroke-width="5.3"/><path d="M690.2 327.300L752.7 481.300" stroke="#b4bfc6" stroke-width="3.5"/><path d="M690.0 327.400L752.5 481.400" stroke="#c9d4db" stroke-width="1.7"/><path d="M763.0 406.0L773.6 503.0" stroke="#7d878d" stroke-width="6.8"/><path d="M762.5 406.100L773.1 503.100" stroke="#9aa5ac" stroke-width="5.3"/><path d="M762.1 406.100L772.7 503.100" stroke="#b4bfc6" stroke-width="3.5"/><path d="M761.9 406.100L772.5 503.100" stroke="#c9d4db" stroke-width="1.7"/><path d="M585.5 466.500L721.0 520.500" stroke="#7d878d" stroke-width="6.8"/><path d="M585.3 467.0L720.8 521.0" stroke="#9aa5ac" stroke-width="5.3"/><path d="M585.2 467.300L720.7 521.300" stroke="#b4bfc6" stroke-width="3.5"/><path d="M585.1 467.500L720.6 521.500" stroke="#c9d4db" stroke-width="1.7"/><path d="M795.0 514.0L785.0 530.500" stroke="#4a5055" stroke-width="7.0"/><path d="M786.2 568.200L801.3 601.0" stroke="#7d878d" stroke-width="6.8"/><path d="M785.7 568.400L800.8 601.200" stroke="#9aa5ac" stroke-width="5.3"/><path d="M785.4 568.600L800.5 601.400" stroke="#b4bfc6" stroke-width="3.5"/><path d="M785.2 568.700L800.3 601.500" stroke="#c9d4db" stroke-width="1.7"/><path d="M777.4 601.0L787.5 717.0" stroke="#7d878d" stroke-width="6.8"/><path d="M776.9 601.0L787.0 717.0" stroke="#9aa5ac" stroke-width="5.3"/><path d="M776.5 601.100L786.6 717.100" stroke="#b4bfc6" stroke-width="3.5"/><path d="M776.3 601.100L786.4 717.100" stroke="#c9d4db" stroke-width="1.7"/><path d="M761.0 616.0L723.4 792.800" stroke="#7d878d" stroke-width="6.8"/><path d="M760.5 615.900L722.9 792.700" stroke="#9aa5ac" stroke-width="5.3"/><path d="M760.1 615.800L722.5 792.600" stroke="#b4bfc6" stroke-width="3.5"/><path d="M759.9 615.800L722.3 792.600" stroke="#c9d4db" stroke-width="1.7"/><path d="M737.0 607.0L651.7 740.0" stroke="#7d878d" stroke-width="6.8"/><path d="M736.6 606.700L651.3 739.700" stroke="#9aa5ac" stroke-width="5.3"/><path d="M736.2 606.500L650.9 739.500" stroke="#b4bfc6" stroke-width="3.5"/><path d="M736.1 606.400L650.8 739.400" stroke="#c9d4db" stroke-width="1.7"/><ellipse cx="760.0" cy="545.0" rx="34.0" ry="67.0" transform="rotate(-7.5 760.0 545.0)" fill="#959fa5"/><ellipse cx="755.0" cy="545.600" rx="34.0" ry="67.0" transform="rotate(-7.5 755.0 545.600)" fill="url(#gflb)"/><ellipse cx="752.5" cy="546.0" rx="26.0" ry="52.0" transform="rotate(-7.5 752.5 546.0)" fill="#5f676c"/><ellipse cx="750.5" cy="546.300" rx="22.5" ry="45.0" transform="rotate(-7.5 750.5 546.300)" fill="#7f898f"/><path d="M684.3 529.300L733 523C742 521.500 749 514 752 502L760 592C755 583 749 577 741 576.500L690.6 580.800Z" fill="url(#ghub)"/><path d="M791.2 497.800L681.8 544.400" stroke="#7d878d" stroke-width="7.4"/><path d="M791.0 497.300L681.6 543.900" stroke="#9aa5ac" stroke-width="5.8"/><path d="M790.8 497.0L681.4 543.600" stroke="#b4bfc6" stroke-width="3.8"/><path d="M790.8 496.800L681.4 543.400" stroke="#c9d4db" stroke-width="1.9"/><path d="M684.3 583.300L801.3 633.600" stroke="#7d878d" stroke-width="7.4"/><path d="M684.1 583.800L801.1 634.100" stroke="#9aa5ac" stroke-width="5.8"/><path d="M683.9 584.100L800.9 634.400" stroke="#b4bfc6" stroke-width="3.8"/><path d="M683.9 584.300L800.9 634.600" stroke="#c9d4db" stroke-width="1.9"/><path d="M676.0 616.0L778.0 740.0" stroke="#7d878d" stroke-width="6.8"/><path d="M675.6 616.300L777.6 740.300" stroke="#9aa5ac" stroke-width="5.3"/><path d="M675.3 616.600L777.3 740.600" stroke="#b4bfc6" stroke-width="3.5"/><path d="M675.2 616.700L777.2 740.700" stroke="#c9d4db" stroke-width="1.7"/><path d="M620.4 351.700L634.5 501.600" stroke="#7d878d" stroke-width="6.8"/><path d="M619.9 351.700L634.0 501.600" stroke="#9aa5ac" stroke-width="5.3"/><path d="M619.5 351.800L633.6 501.700" stroke="#b4bfc6" stroke-width="3.5"/><path d="M619.3 351.800L633.4 501.700" stroke="#c9d4db" stroke-width="1.7"/><path d="M685.7 321.500L648.5 494.0" stroke="#7d878d" stroke-width="6.8"/><path d="M685.2 321.400L648.0 493.900" stroke="#9aa5ac" stroke-width="5.3"/><path d="M684.8 321.300L647.6 493.800" stroke="#b4bfc6" stroke-width="3.5"/><path d="M684.6 321.300L647.4 493.800" stroke="#c9d4db" stroke-width="1.7"/><path d="M749.8 385.700L668.0 509.0" stroke="#7d878d" stroke-width="6.8"/><path d="M749.4 385.400L667.6 508.700" stroke="#9aa5ac" stroke-width="5.3"/><path d="M749.1 385.200L667.3 508.500" stroke="#b4bfc6" stroke-width="3.5"/><path d="M748.9 385.100L667.1 508.400" stroke="#c9d4db" stroke-width="1.7"/><path d="M585.5 466.500L621.5 535.500" stroke="#7d878d" stroke-width="6.8"/><path d="M585.1 466.700L621.1 535.700" stroke="#9aa5ac" stroke-width="5.3"/><path d="M584.7 466.900L620.7 535.900" stroke="#b4bfc6" stroke-width="3.5"/><path d="M584.5 467.0L620.5 536.0" stroke="#c9d4db" stroke-width="1.7"/><path d="M596.3 616.0L622.7 579.600" stroke="#4a5055" stroke-width="7.0"/><path d="M596.3 616.0L631.5 604.700" stroke="#7d878d" stroke-width="6.8"/><path d="M596.1 615.500L631.3 604.200" stroke="#9aa5ac" stroke-width="5.3"/><path d="M596.0 615.100L631.2 603.800" stroke="#b4bfc6" stroke-width="3.5"/><path d="M596.0 615.0L631.2 603.700" stroke="#c9d4db" stroke-width="1.7"/><path d="M636.6 613.500L649.8 741.900" stroke="#7d878d" stroke-width="6.8"/><path d="M636.1 613.600L649.3 742.0" stroke="#9aa5ac" stroke-width="5.3"/><path d="M635.7 613.600L648.9 742.0" stroke="#b4bfc6" stroke-width="3.5"/><path d="M635.5 613.600L648.7 742.0" stroke="#c9d4db" stroke-width="1.7"/><path d="M656.7 627.300L721.5 792.800" stroke="#7d878d" stroke-width="6.8"/><path d="M656.2 627.500L721.0 793.0" stroke="#9aa5ac" stroke-width="5.3"/><path d="M655.9 627.600L720.7 793.100" stroke="#b4bfc6" stroke-width="3.5"/><path d="M655.7 627.700L720.5 793.200" stroke="#c9d4db" stroke-width="1.7"/><ellipse cx="659.0" cy="560.0" rx="33.0" ry="67.0" transform="rotate(-7.5 659.0 560.0)" fill="#6a7379"/><ellipse cx="656.0" cy="560.400" rx="33.0" ry="67.0" transform="rotate(-7.5 656.0 560.400)" fill="#9aa4aa"/><ellipse cx="653.0" cy="560.700" rx="33.0" ry="67.0" transform="rotate(-7.5 653.0 560.700)" fill="url(#gfl)"/><ellipse cx="651.0" cy="561.0" rx="25.5" ry="51.0" transform="rotate(-7.5 651.0 561.0)" fill="#98a2a8"/><ellipse cx="651.8" cy="561.200" rx="24.5" ry="49.5" transform="rotate(-7.5 651.8 561.200)" fill="#7a838a"/><ellipse cx="649.5" cy="561.500" rx="20.5" ry="41.0" transform="rotate(-7.5 649.5 561.500)" fill="#5f676d"/><ellipse cx="650.3" cy="561.800" rx="19.5" ry="39.5" transform="rotate(-7.5 650.3 561.800)" fill="#6d767c"/><ellipse cx="646.5" cy="562.0" rx="10.5" ry="19.5" transform="rotate(-7.5 646.5 562.0)" fill="#c5d0d7"/><ellipse cx="648.5" cy="563.0" rx="8.5" ry="17.5" transform="rotate(-7.5 648.5 563.0)" fill="#8d979d"/><ellipse cx="645.5" cy="561.0" rx="7.0" ry="16.0" transform="rotate(-7.5 645.5 561.0)" fill="#b4bfc6" opacity=".8"/><ellipse cx="651.7" cy="533.600" rx="1.8" ry="2.8" transform="rotate(-7.5 651.7 533.600)" fill="#cfdae1"/><ellipse cx="663.0" cy="559.500" rx="1.8" ry="2.8" transform="rotate(-7.5 663.0 559.500)" fill="#cfdae1"/><ellipse cx="658.8" cy="587.300" rx="1.8" ry="2.8" transform="rotate(-7.5 658.8 587.300)" fill="#cfdae1"/><ellipse cx="643.3" cy="589.400" rx="1.8" ry="2.8" transform="rotate(-7.5 643.3 589.400)" fill="#cfdae1"/><ellipse cx="632.0" cy="563.500" rx="1.8" ry="2.8" transform="rotate(-7.5 632.0 563.500)" fill="#cfdae1"/><ellipse cx="636.2" cy="535.700" rx="1.8" ry="2.8" transform="rotate(-7.5 636.2 535.700)" fill="#cfdae1"/></g><g stroke-width="1.200" fill="none"><path d="M705.200 553.700L729.400 550.900" stroke="#1fd8e8"/><path d="M705.200 553.700L695.700 568.700" stroke="#22e03a"/><path d="M705.200 553.700L714.800 576.500" stroke="#e8102a"/></g><circle cx="729.400" cy="550.900" r="2.400" fill="#1fd8e8"/><circle cx="695.700" cy="568.700" r="2.200" fill="#22e03a"/><circle cx="714.800" cy="576.500" r="2.600" fill="#e8102a"/>
<g clip-path="url(#cRING)">
<path d="M627.2 248.100L637.6 247.500L648.1 248.400L658.8 250.800L669.5 254.800L680.2 260.200L690.8 267.100L701.3 275.300L711.7 285.0L721.8 296.0L731.7 308.300L741.2 321.800L750.5 336.500L759.3 352.200L767.6 369.0L775.5 386.700L782.9 405.200L789.7 424.500L795.9 444.400L801.5 464.900L806.4 485.800L810.7 507.100L814.2 528.600L817.1 550.300L819.2 572.100L820.6 593.700L821.3 615.200L821.2 636.500L820.3 657.300L818.8 677.700L816.4 697.500L813.4 716.600L809.7 734.900L805.2 752.400L800.1 769.0L794.4 784.500L788.0 798.900L781.1 812.200L773.6 824.200L765.5 834.900L757.1 844.300L748.1 852.300L738.8 858.900L729.2 864.0L719.2 867.600L709.0 869.700L698.6 870.300L688.1 869.400L677.4 867.0L666.8 863.0L656.1 857.600L645.4 850.800L634.9 842.500L624.6 832.800L614.4 821.800L604.6 809.500L595.0 796.0L585.8 781.300L577.0 765.600L568.6 748.800L560.7 731.100L553.4 712.600L546.6 693.400L540.3 673.400L534.8 653.0L529.8 632.0L525.6 610.700L522.0 589.200L519.1 567.500L517.0 545.700L515.6 524.100L515.0 502.600L515.1 481.300L515.9 460.500L517.5 440.100L519.8 420.300L522.8 401.200L526.6 382.900L531.0 365.400L536.1 348.800L541.9 333.300L548.2 318.900L555.2 305.600L562.7 293.600L570.7 282.900L579.2 273.500L588.1 265.500L597.4 258.900L607.0 253.800L617.0 250.200Z" fill="url(#gside)"/>
<ellipse cx="670.4" cy="558.600" rx="136.6" ry="287.5" transform="rotate(-7.5 670.4 558.600)" fill="none" stroke="url(#glight)" stroke-width="16" filter="url(#b6)"/>
<ellipse cx="668.1" cy="558.900" rx="148.4" ry="312.5" transform="rotate(-7.5 668.1 558.900)" fill="none" stroke="url(#gouter)" stroke-width="15" filter="url(#b2)"/>
<ellipse cx="680.9" cy="557.200" rx="118.3" ry="249.0" transform="rotate(-7.5 680.9 557.200)" fill="none" stroke="#596166" stroke-width="11" filter="url(#b2)" opacity=".85"/>
<ellipse cx="668.1" cy="558.900" rx="147.0" ry="309.5" transform="rotate(-7.5 668.1 558.900)" fill="none" stroke="url(#gblend)" stroke-width="16" filter="url(#b4)"/>
<ellipse cx="677.4" cy="557.700" rx="125.4" ry="264.0" transform="rotate(-7.5 677.4 557.700)" fill="none" stroke="url(#gcrease)" stroke-width="40" filter="url(#b6)"/>
<ellipse cx="800" cy="790" rx="55" ry="110" transform="rotate(28 800 790)" fill="#4c5358" opacity=".75" filter="url(#b12)"/>
</g>
<path d="M650.8 315.100L658.8 314.600L667.1 315.300L675.3 317.200L683.7 320.300L692.0 324.500L700.2 329.800L708.4 336.300L716.5 343.800L724.4 352.400L732.1 362.0L739.5 372.500L746.7 383.900L753.5 396.100L760.1 409.200L766.2 422.900L771.9 437.400L777.2 452.400L782.0 467.900L786.4 483.800L790.2 500.100L793.5 516.700L796.3 533.400L798.5 550.300L800.2 567.200L801.3 584.100L801.8 600.800L801.7 617.400L801.1 633.600L799.8 649.500L798.0 664.900L795.7 679.700L792.8 694.0L789.3 707.600L785.3 720.500L780.9 732.600L775.9 743.800L770.5 754.100L764.7 763.500L758.4 771.800L751.8 779.100L744.9 785.400L737.6 790.500L730.1 794.500L722.4 797.300L714.4 798.900L706.4 799.400L698.1 798.700L689.9 796.800L681.5 793.700L673.2 789.500L665.0 784.200L656.8 777.700L648.7 770.200L640.8 761.600L633.1 752.0L625.7 741.500L618.5 730.100L611.7 717.900L605.1 704.800L599.0 691.100L593.3 676.600L588.0 661.600L583.2 646.100L578.8 630.200L575.0 613.900L571.7 597.300L568.9 580.600L566.7 563.700L565.0 546.800L563.9 529.900L563.4 513.200L563.5 496.600L564.1 480.400L565.4 464.500L567.2 449.100L569.5 434.300L572.4 420.0L575.9 406.400L579.9 393.500L584.3 381.400L589.3 370.200L594.7 359.900L600.5 350.500L606.8 342.200L613.4 334.900L620.3 328.600L627.6 323.500L635.1 319.500L642.8 316.700Z" fill="none" stroke="#a9b3ba" stroke-width="1.200" opacity=".8"/>
</svg>
</div></body></html>
